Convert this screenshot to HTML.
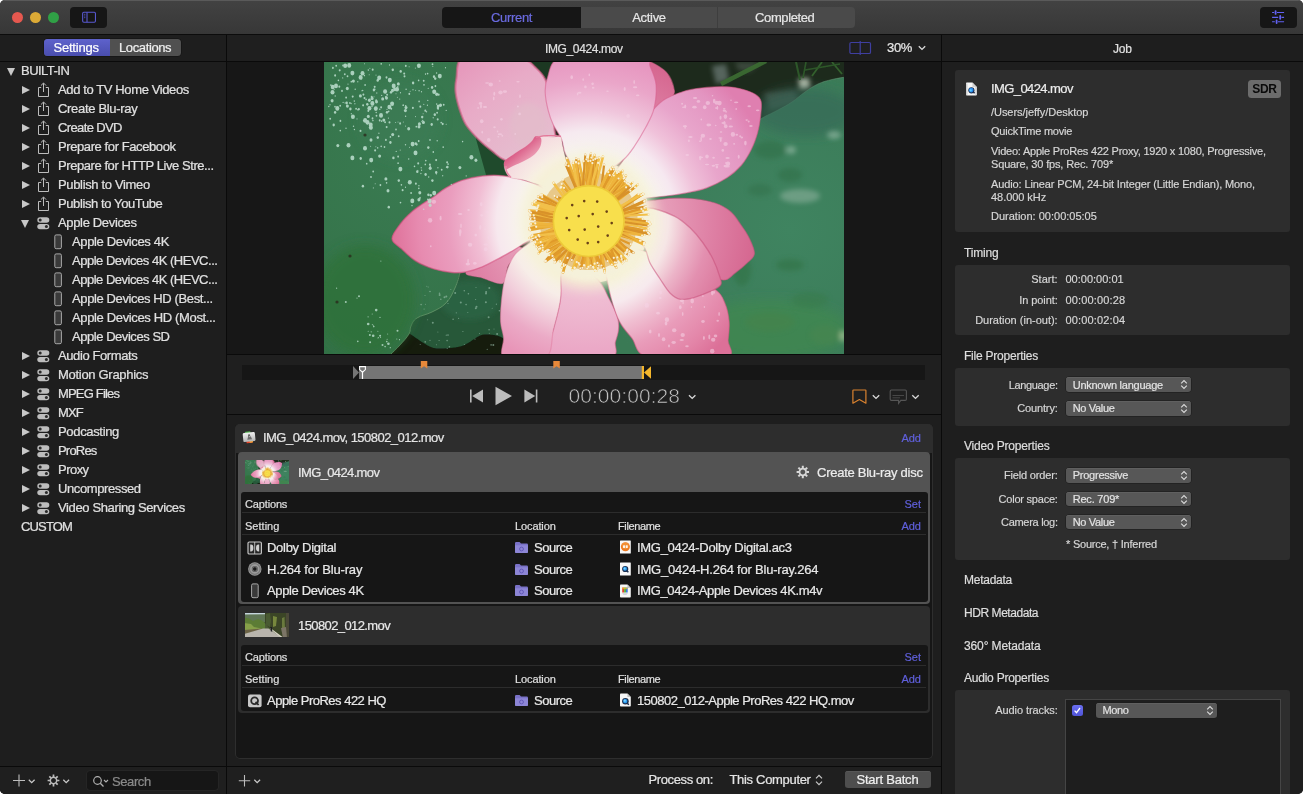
<!DOCTYPE html>
<html lang="en">
<head>
<meta charset="utf-8">
<title>Compressor</title>
<style>
*{box-sizing:border-box;margin:0;padding:0}
html,body{width:1306px;height:795px;background:#fff;overflow:hidden}
body{font-family:"Liberation Sans",sans-serif;font-size:13px;color:#dcdcdc;position:relative;-webkit-font-smoothing:antialiased}
.abs{position:absolute}
#win{will-change:transform;position:absolute;left:0;top:0;width:1303px;height:793.500px;background:#1e1e1e;border-radius:5px;overflow:hidden}
.t{position:absolute;white-space:nowrap;line-height:16px;letter-spacing:-.38px;-webkit-text-stroke:.22px}
.t11{position:absolute;white-space:nowrap;font-size:11px;line-height:14px;letter-spacing:-.18px;color:#d6d6d6;-webkit-text-stroke:.18px}
.t12{position:absolute;white-space:nowrap;font-size:12px;line-height:14px;letter-spacing:-.25px;color:#d9d9d9;-webkit-text-stroke:.2px}
/* title bar */
#titlebar{left:0;top:0;width:1304px;height:34px;background:linear-gradient(#424242,#373737);border-top:1px solid #5a5a5a}
#tbline{left:0;top:34px;width:1304px;height:1px;background:#0c0c0c}
.light{position:absolute;top:11.800px;width:11.300px;height:11.300px;border-radius:50%}
.tbbtn{position:absolute;top:7px;height:21px;background:#161616;border-radius:4px}
#tabs{left:442px;top:7px;width:413px;height:21px;border-radius:4px;background:#4a4a4a;overflow:hidden}
#tabs div{-webkit-text-stroke:.2px;position:absolute;top:0;height:21px;text-align:center;line-height:21px;letter-spacing:-.3px}
/* sidebar */
#sidebar{left:0;top:35px;width:226px;height:759px;background:#1e1e1e}
.vsep{position:absolute;width:1px;background:#0a0a0a}
.hsep{position:absolute;height:1px;background:#0a0a0a}
.row{position:absolute;left:0;width:226px;height:19px}
.row .t{top:1.300px;color:#e0e0e0}
.tri{position:absolute;width:0;height:0}
.tri.r{border-left:8px solid #c8c8c8;border-top:4.5px solid transparent;border-bottom:4.5px solid transparent}
.tri.d{border-top:8px solid #c8c8c8;border-left:4.5px solid transparent;border-right:4.5px solid transparent}
/* center */
#viewerhead{left:227px;top:35px;width:714px;height:26px;background:#1f1f1f}
#viewer{left:227px;top:62px;width:714px;height:292px;background:#171717}
#transport{left:227px;top:355px;width:714px;height:59px;background:#1f1f1f}
#batcharea{left:227px;top:415px;width:714px;height:351px;background:#1e1e1e}
#bottombar{left:0;top:767px;width:941px;height:27px;background:#1f1f1f}
/* right */
#right{left:942px;top:35px;width:362px;height:759px;background:#1e1e1e}
.card{position:absolute;left:955px;width:335px;background:#2d2d2d;border-radius:3px}
.sel{position:absolute;left:1066px;width:126px;height:15px;background:#575757;border-radius:3px;box-shadow:0 0 0 .5px #1a1a1a, inset 0 .5px 0 #6a6a6a}
.sel span{-webkit-text-stroke:.18px;position:absolute;left:6.400px;top:.4px;font-size:11px;line-height:15px;color:#e4e4e4;letter-spacing:-.18px;white-space:nowrap}
.sel svg{position:absolute;right:3px;top:2px}
.lab{position:absolute;font-size:11px;line-height:14px;letter-spacing:-.18px;color:#d6d6d6;white-space:nowrap;text-align:right;width:110px;-webkit-text-stroke:.18px;left:947.700px}
</style>
</head>
<body>
<div id="win">
<!-- TITLEBAR -->
<div id="titlebar" class="abs"></div>
<div id="tbline" class="abs"></div>
<div class="light" style="left:11.700px;background:#e5584f"></div>
<div class="light" style="left:29.700px;background:#dcaa36"></div>
<div class="light" style="left:47.800px;background:#30a046"></div>
<div class="tbbtn" style="left:70px;width:37px"></div>
<div class="tbbtn" style="left:1259.500px;width:37px"></div>
<div id="tabs" class="abs">
  <div style="left:0;width:139px;background:#161616;color:#6b6be0">Current</div>
  <div style="left:139px;width:136px;color:#e6e6e6">Active</div>
  <div style="left:275px;width:134.500px;color:#e6e6e6;border-left:1px solid #3e3e3e;letter-spacing:-.4px">Completed</div>
</div>
<!-- SIDEBAR -->
<div id="sidebar" class="abs"></div>
<div class="vsep" style="left:226px;top:35px;height:759px"></div>
<!-- CENTER -->
<div id="viewerhead" class="abs"></div>
<div class="hsep" style="left:0;top:61px;width:1304px"></div>
<div id="viewer" class="abs"></div>
<div class="hsep" style="left:227px;top:354px;width:714px"></div>
<div id="transport" class="abs"></div>
<div class="hsep" style="left:227px;top:414px;width:714px"></div>
<div id="batcharea" class="abs"></div>
<div class="hsep" style="left:0;top:766px;width:941px"></div>
<div id="bottombar" class="abs"></div>
<div class="vsep" style="left:226px;top:767px;height:27px"></div>
<!-- RIGHT -->
<div class="vsep" style="left:941px;top:35px;height:759px"></div>
<div id="right" class="abs"></div>
<div class="hsep" style="left:942px;top:61px;width:362px"></div>
<!-- TOOLBAR ICONS -->
<svg class="abs" style="left:70px;top:7px" width="37" height="21" viewBox="0 0 37 21"><rect x="12.650" y="5.250" width="12.800" height="10" rx="1.200" fill="none" stroke="#5858d0" stroke-width="1.100"/><path d="M17 5.250V15.250" stroke="#5858d0" stroke-width="1.100"/><path d="M14.200 7.300H15.300M14.200 9H15.300M14.200 10.700H15.300" stroke="#5a5ad8" stroke-width=".9"/></svg>
<svg class="abs" style="left:1259px;top:7px" width="38" height="21" viewBox="0 0 38 21"><g stroke="#6262f2" stroke-width="1.100" fill="none"><path d="M13.100 5.500H15.200M18 5.500H25.100M13.100 10.400H19.200M22.500 10.400H25.100M13.100 14.700H15.800M19 14.700H25.100"/></g><g stroke="#6262f2" stroke-width="1.800" stroke-linecap="round"><path d="M16.600 4.100V6.900M21.200 9V11.800M17.600 13.300V16.100"/></g></svg>
<!-- SIDEBAR CONTENT -->
<div class="abs" style="left:44px;top:39px;width:137px;height:17px;border-radius:3.5px;background:#505050;overflow:hidden;box-shadow:0 0 0 .5px #111"><div class="abs" style="left:0;top:0;width:66px;height:17px;background:linear-gradient(#5e62cc,#4a4eae)"></div><div class="t" style="left:9.5px;top:0.5px;color:#fff;letter-spacing:-.22px">Settings</div><div class="t" style="left:75px;top:0.5px;color:#f0f0f0;letter-spacing:-.38px">Locations</div></div>
<div class="row" style="top:62px"><i class="tri d" style="left:7px;top:6px"></i><div class="t" style="left:21px;letter-spacing:-0.527px">BUILT-IN</div></div>
<div class="row" style="top:81px"><i class="tri r" style="left:22px;top:4.5px"></i><svg class="abs" style="left:37px;top:1px" width="13" height="16" viewBox="0 0 13 16"><path d="M4.2 5.5H1.5V14.5H11.5V5.5H8.8" fill="none" stroke="#bdbdbd" stroke-width="1"/><path d="M6.5 10V1.2M3.9 3.6L6.5 1L9.1 3.6" fill="none" stroke="#bdbdbd" stroke-width="1"/></svg><div class="t" style="left:58px;letter-spacing:-0.384px">Add to TV Home Videos</div></div>
<div class="row" style="top:100px"><i class="tri r" style="left:22px;top:4.5px"></i><svg class="abs" style="left:37px;top:1px" width="13" height="16" viewBox="0 0 13 16"><path d="M4.2 5.5H1.5V14.5H11.5V5.5H8.8" fill="none" stroke="#bdbdbd" stroke-width="1"/><path d="M6.5 10V1.2M3.9 3.6L6.5 1L9.1 3.6" fill="none" stroke="#bdbdbd" stroke-width="1"/></svg><div class="t" style="left:58px;letter-spacing:-0.316px">Create Blu-ray</div></div>
<div class="row" style="top:119px"><i class="tri r" style="left:22px;top:4.5px"></i><svg class="abs" style="left:37px;top:1px" width="13" height="16" viewBox="0 0 13 16"><path d="M4.2 5.5H1.5V14.5H11.5V5.5H8.8" fill="none" stroke="#bdbdbd" stroke-width="1"/><path d="M6.5 10V1.2M3.9 3.6L6.5 1L9.1 3.6" fill="none" stroke="#bdbdbd" stroke-width="1"/></svg><div class="t" style="left:58px;letter-spacing:-0.63px">Create DVD</div></div>
<div class="row" style="top:138px"><i class="tri r" style="left:22px;top:4.5px"></i><svg class="abs" style="left:37px;top:1px" width="13" height="16" viewBox="0 0 13 16"><path d="M4.2 5.5H1.5V14.5H11.5V5.5H8.8" fill="none" stroke="#bdbdbd" stroke-width="1"/><path d="M6.5 10V1.2M3.9 3.6L6.5 1L9.1 3.6" fill="none" stroke="#bdbdbd" stroke-width="1"/></svg><div class="t" style="left:58px;letter-spacing:-0.407px">Prepare for Facebook</div></div>
<div class="row" style="top:157px"><i class="tri r" style="left:22px;top:4.5px"></i><svg class="abs" style="left:37px;top:1px" width="13" height="16" viewBox="0 0 13 16"><path d="M4.2 5.5H1.5V14.5H11.5V5.5H8.8" fill="none" stroke="#bdbdbd" stroke-width="1"/><path d="M6.5 10V1.2M3.9 3.6L6.5 1L9.1 3.6" fill="none" stroke="#bdbdbd" stroke-width="1"/></svg><div class="t" style="left:58px;letter-spacing:-0.429px">Prepare for HTTP Live Stre...</div></div>
<div class="row" style="top:176px"><i class="tri r" style="left:22px;top:4.5px"></i><svg class="abs" style="left:37px;top:1px" width="13" height="16" viewBox="0 0 13 16"><path d="M4.2 5.5H1.5V14.5H11.5V5.5H8.8" fill="none" stroke="#bdbdbd" stroke-width="1"/><path d="M6.5 10V1.2M3.9 3.6L6.5 1L9.1 3.6" fill="none" stroke="#bdbdbd" stroke-width="1"/></svg><div class="t" style="left:58px;letter-spacing:-0.341px">Publish to Vimeo</div></div>
<div class="row" style="top:195px"><i class="tri r" style="left:22px;top:4.5px"></i><svg class="abs" style="left:37px;top:1px" width="13" height="16" viewBox="0 0 13 16"><path d="M4.2 5.5H1.5V14.5H11.5V5.5H8.8" fill="none" stroke="#bdbdbd" stroke-width="1"/><path d="M6.5 10V1.2M3.9 3.6L6.5 1L9.1 3.6" fill="none" stroke="#bdbdbd" stroke-width="1"/></svg><div class="t" style="left:58px;letter-spacing:-0.397px">Publish to YouTube</div></div>
<div class="row" style="top:214px"><i class="tri d" style="left:21px;top:6px"></i><svg class="abs" style="left:37px;top:3px" width="13" height="13" viewBox="0 0 13 13"><rect x="0.3" y="0.3" width="12" height="5.4" rx="2.7" fill="#bdbdbd"/><rect x="0.3" y="6.9" width="12" height="5.4" rx="2.7" fill="#bdbdbd"/><circle cx="3.2" cy="3" r="1.5" fill="#2a2a2a"/><circle cx="9.4" cy="9.6" r="1.5" fill="#2a2a2a"/></svg><div class="t" style="left:58px;letter-spacing:-0.342px">Apple Devices</div></div>
<div class="row" style="top:233px"><svg class="abs" style="left:54px;top:1px" width="9" height="16" viewBox="0 0 9 16"><rect x="0.8" y="0.9" width="6.6" height="13.8" rx="1.4" fill="#3a3a3a" stroke="#a8a8a8" stroke-width="1"/></svg><div class="t" style="left:72px;letter-spacing:-0.354px">Apple Devices 4K</div></div>
<div class="row" style="top:252px"><svg class="abs" style="left:54px;top:1px" width="9" height="16" viewBox="0 0 9 16"><rect x="0.8" y="0.9" width="6.6" height="13.8" rx="1.4" fill="#3a3a3a" stroke="#a8a8a8" stroke-width="1"/></svg><div class="t" style="left:72px;letter-spacing:-0.484px">Apple Devices 4K (HEVC...</div></div>
<div class="row" style="top:271px"><svg class="abs" style="left:54px;top:1px" width="9" height="16" viewBox="0 0 9 16"><rect x="0.8" y="0.9" width="6.6" height="13.8" rx="1.4" fill="#3a3a3a" stroke="#a8a8a8" stroke-width="1"/></svg><div class="t" style="left:72px;letter-spacing:-0.484px">Apple Devices 4K (HEVC...</div></div>
<div class="row" style="top:290px"><svg class="abs" style="left:54px;top:1px" width="9" height="16" viewBox="0 0 9 16"><rect x="0.8" y="0.9" width="6.6" height="13.8" rx="1.4" fill="#3a3a3a" stroke="#a8a8a8" stroke-width="1"/></svg><div class="t" style="left:72px;letter-spacing:-0.382px">Apple Devices HD (Best...</div></div>
<div class="row" style="top:309px"><svg class="abs" style="left:54px;top:1px" width="9" height="16" viewBox="0 0 9 16"><rect x="0.8" y="0.9" width="6.6" height="13.8" rx="1.4" fill="#3a3a3a" stroke="#a8a8a8" stroke-width="1"/></svg><div class="t" style="left:72px;letter-spacing:-0.355px">Apple Devices HD (Most...</div></div>
<div class="row" style="top:328px"><svg class="abs" style="left:54px;top:1px" width="9" height="16" viewBox="0 0 9 16"><rect x="0.8" y="0.9" width="6.6" height="13.8" rx="1.4" fill="#3a3a3a" stroke="#a8a8a8" stroke-width="1"/></svg><div class="t" style="left:72px;letter-spacing:-0.451px">Apple Devices SD</div></div>
<div class="row" style="top:347px"><i class="tri r" style="left:22px;top:4.5px"></i><svg class="abs" style="left:37px;top:3px" width="13" height="13" viewBox="0 0 13 13"><rect x="0.3" y="0.3" width="12" height="5.4" rx="2.7" fill="#bdbdbd"/><rect x="0.3" y="6.9" width="12" height="5.4" rx="2.7" fill="#bdbdbd"/><circle cx="3.2" cy="3" r="1.5" fill="#2a2a2a"/><circle cx="9.4" cy="9.6" r="1.5" fill="#2a2a2a"/></svg><div class="t" style="left:58px;letter-spacing:-0.403px">Audio Formats</div></div>
<div class="row" style="top:366px"><i class="tri r" style="left:22px;top:4.5px"></i><svg class="abs" style="left:37px;top:3px" width="13" height="13" viewBox="0 0 13 13"><rect x="0.3" y="0.3" width="12" height="5.4" rx="2.7" fill="#bdbdbd"/><rect x="0.3" y="6.9" width="12" height="5.4" rx="2.7" fill="#bdbdbd"/><circle cx="3.2" cy="3" r="1.5" fill="#2a2a2a"/><circle cx="9.4" cy="9.6" r="1.5" fill="#2a2a2a"/></svg><div class="t" style="left:58px;letter-spacing:-0.296px">Motion Graphics</div></div>
<div class="row" style="top:385px"><i class="tri r" style="left:22px;top:4.5px"></i><svg class="abs" style="left:37px;top:3px" width="13" height="13" viewBox="0 0 13 13"><rect x="0.3" y="0.3" width="12" height="5.4" rx="2.7" fill="#bdbdbd"/><rect x="0.3" y="6.9" width="12" height="5.4" rx="2.7" fill="#bdbdbd"/><circle cx="3.2" cy="3" r="1.5" fill="#2a2a2a"/><circle cx="9.4" cy="9.6" r="1.5" fill="#2a2a2a"/></svg><div class="t" style="left:58px;letter-spacing:-0.815px">MPEG Files</div></div>
<div class="row" style="top:404px"><i class="tri r" style="left:22px;top:4.5px"></i><svg class="abs" style="left:37px;top:3px" width="13" height="13" viewBox="0 0 13 13"><rect x="0.3" y="0.3" width="12" height="5.4" rx="2.7" fill="#bdbdbd"/><rect x="0.3" y="6.9" width="12" height="5.4" rx="2.7" fill="#bdbdbd"/><circle cx="3.2" cy="3" r="1.5" fill="#2a2a2a"/><circle cx="9.4" cy="9.6" r="1.5" fill="#2a2a2a"/></svg><div class="t" style="left:58px;letter-spacing:-0.85px">MXF</div></div>
<div class="row" style="top:423px"><i class="tri r" style="left:22px;top:4.5px"></i><svg class="abs" style="left:37px;top:3px" width="13" height="13" viewBox="0 0 13 13"><rect x="0.3" y="0.3" width="12" height="5.4" rx="2.7" fill="#bdbdbd"/><rect x="0.3" y="6.9" width="12" height="5.4" rx="2.7" fill="#bdbdbd"/><circle cx="3.2" cy="3" r="1.5" fill="#2a2a2a"/><circle cx="9.4" cy="9.6" r="1.5" fill="#2a2a2a"/></svg><div class="t" style="left:58px;letter-spacing:-0.335px">Podcasting</div></div>
<div class="row" style="top:442px"><i class="tri r" style="left:22px;top:4.5px"></i><svg class="abs" style="left:37px;top:3px" width="13" height="13" viewBox="0 0 13 13"><rect x="0.3" y="0.3" width="12" height="5.4" rx="2.7" fill="#bdbdbd"/><rect x="0.3" y="6.9" width="12" height="5.4" rx="2.7" fill="#bdbdbd"/><circle cx="3.2" cy="3" r="1.5" fill="#2a2a2a"/><circle cx="9.4" cy="9.6" r="1.5" fill="#2a2a2a"/></svg><div class="t" style="left:58px;letter-spacing:-0.81px">ProRes</div></div>
<div class="row" style="top:461px"><i class="tri r" style="left:22px;top:4.5px"></i><svg class="abs" style="left:37px;top:3px" width="13" height="13" viewBox="0 0 13 13"><rect x="0.3" y="0.3" width="12" height="5.4" rx="2.7" fill="#bdbdbd"/><rect x="0.3" y="6.9" width="12" height="5.4" rx="2.7" fill="#bdbdbd"/><circle cx="3.2" cy="3" r="1.5" fill="#2a2a2a"/><circle cx="9.4" cy="9.6" r="1.5" fill="#2a2a2a"/></svg><div class="t" style="left:58px;letter-spacing:-0.531px">Proxy</div></div>
<div class="row" style="top:480px"><i class="tri r" style="left:22px;top:4.5px"></i><svg class="abs" style="left:37px;top:3px" width="13" height="13" viewBox="0 0 13 13"><rect x="0.3" y="0.3" width="12" height="5.4" rx="2.7" fill="#bdbdbd"/><rect x="0.3" y="6.9" width="12" height="5.4" rx="2.7" fill="#bdbdbd"/><circle cx="3.2" cy="3" r="1.5" fill="#2a2a2a"/><circle cx="9.4" cy="9.6" r="1.5" fill="#2a2a2a"/></svg><div class="t" style="left:58px;letter-spacing:-0.393px">Uncompressed</div></div>
<div class="row" style="top:499px"><i class="tri r" style="left:22px;top:4.5px"></i><svg class="abs" style="left:37px;top:3px" width="13" height="13" viewBox="0 0 13 13"><rect x="0.3" y="0.3" width="12" height="5.4" rx="2.7" fill="#bdbdbd"/><rect x="0.3" y="6.9" width="12" height="5.4" rx="2.7" fill="#bdbdbd"/><circle cx="3.2" cy="3" r="1.5" fill="#2a2a2a"/><circle cx="9.4" cy="9.6" r="1.5" fill="#2a2a2a"/></svg><div class="t" style="left:58px;letter-spacing:-0.366px">Video Sharing Services</div></div>
<div class="row" style="top:518px"><div class="t" style="left:21px;letter-spacing:-0.85px">CUSTOM</div></div>
<svg class="abs" style="left:10px;top:771px" width="70" height="20" viewBox="0 0 70 20">
<path d="M9 3.5V15.5M3 9.5H15" stroke="#bdbdbd" stroke-width="1.1" fill="none"/>
<path d="M18.8 8.8L21.7 11.6L24.6 8.8" stroke="#c8c8c8" stroke-width="1.3" fill="none"/>
<g transform="translate(43.5,9.5)" fill="none" stroke="#bdbdbd"><circle r="3.2" stroke-width="1.5"/><g stroke-width="1.7"><path d="M0 -3.6V-5.9M0 3.6V5.9M-3.6 0H-5.9M3.6 0H5.9M2.55 2.55L4.2 4.2M-2.55 2.55L-4.2 4.2M2.55 -2.55L4.2 -4.2M-2.55 -2.55L-4.2 -4.2"/></g></g>
<path d="M53.3 8.8L56.2 11.6L59.1 8.8" stroke="#c8c8c8" stroke-width="1.3" fill="none"/>
</svg>
<div class="abs" style="left:87px;top:771px;width:131px;height:19px;background:#161616;border-radius:3px;box-shadow:0 0 0 .5px #2c2c2c"></div>
<svg class="abs" style="left:91px;top:773px" width="20" height="16" viewBox="0 0 20 16"><circle cx="6.5" cy="7.5" r="3.8" fill="none" stroke="#b0b0b0" stroke-width="1.2"/><path d="M9.3 10.3L12.5 13.5" stroke="#b0b0b0" stroke-width="1.3"/><path d="M13 7L15 9L17 7" stroke="#b0b0b0" stroke-width="1.1" fill="none"/></svg>
<div class="t" style="left:112px;top:773.600px;color:#8a8a8a;letter-spacing:-.4px">Search</div>
<!-- FLOWER IMAGE -->
<svg class="abs" style="left:324px;top:62px" width="520" height="292" viewBox="324 62 520 292">
<defs>
<filter id="b1" x="-10%" y="-10%" width="120%" height="120%"><feGaussianBlur stdDeviation="0.7"/></filter>
<filter id="b2" x="-20%" y="-20%" width="140%" height="140%"><feGaussianBlur stdDeviation="2.5"/></filter>
<filter id="b3" x="-20%" y="-20%" width="140%" height="140%"><feGaussianBlur stdDeviation="6"/></filter>
<filter id="b0" x="-10%" y="-10%" width="120%" height="120%"><feGaussianBlur stdDeviation="0.35"/></filter>
<radialGradient id="gA" gradientUnits="userSpaceOnUse" cx="588.7" cy="221.1" r="200"><stop offset="0.35" stop-color="#e4c3d0"/><stop offset="0.55" stop-color="#e6b9cd"/><stop offset="0.8" stop-color="#e8abc7"/><stop offset="1" stop-color="#e699bc"/></radialGradient>
<radialGradient id="gB" gradientUnits="userSpaceOnUse" cx="588.7" cy="221.1" r="200"><stop offset="0.33" stop-color="#f7f5ee"/><stop offset="0.45" stop-color="#f6eaf0"/><stop offset="0.56" stop-color="#f0c6dc"/><stop offset="0.7" stop-color="#eaa6c9"/><stop offset="0.85" stop-color="#e693be"/><stop offset="1" stop-color="#e282b0"/></radialGradient>
<radialGradient id="gC" gradientUnits="userSpaceOnUse" cx="588.7" cy="221.1" r="200"><stop offset="0.33" stop-color="#f8f6ef"/><stop offset="0.44" stop-color="#f6e8f0"/><stop offset="0.55" stop-color="#f0c2da"/><stop offset="0.68" stop-color="#e8a5cb"/><stop offset="0.85" stop-color="#e395c1"/><stop offset="0.96" stop-color="#df7fb0"/></radialGradient>
<radialGradient id="gD" gradientUnits="userSpaceOnUse" cx="588.7" cy="221.1" r="200"><stop offset="0.3" stop-color="#e9a8c0"/><stop offset="0.6" stop-color="#df82a6"/><stop offset="0.85" stop-color="#d5668f"/></radialGradient>
<radialGradient id="gE" gradientUnits="userSpaceOnUse" cx="588.7" cy="221.1" r="200"><stop offset="0.3" stop-color="#f8f5e6"/><stop offset="0.4" stop-color="#f6e6e6"/><stop offset="0.5" stop-color="#ecb4c8"/><stop offset="0.6" stop-color="#e390b0"/><stop offset="0.72" stop-color="#dc7a9e"/></radialGradient>
<radialGradient id="gF" gradientUnits="userSpaceOnUse" cx="588.7" cy="221.1" r="200"><stop offset="0.3" stop-color="#f9f6ea"/><stop offset="0.43" stop-color="#f7eaee"/><stop offset="0.54" stop-color="#f0c0d2"/><stop offset="0.66" stop-color="#e99cba"/><stop offset="0.8" stop-color="#e385a8"/><stop offset="0.9" stop-color="#dc7098"/></radialGradient>
<radialGradient id="gG" gradientUnits="userSpaceOnUse" cx="588.7" cy="221.1" r="200"><stop offset="0.2" stop-color="#f4d6e0"/><stop offset="0.4" stop-color="#efbcd2"/><stop offset="0.7" stop-color="#eaa4c4"/></radialGradient>
<radialGradient id="gH" gradientUnits="userSpaceOnUse" cx="588.7" cy="221.1" r="200"><stop offset="0.28" stop-color="#f8f6e6"/><stop offset="0.4" stop-color="#f7ede8"/><stop offset="0.5" stop-color="#f2d0dc"/><stop offset="0.62" stop-color="#ebaac6"/><stop offset="0.75" stop-color="#e895b8"/></radialGradient>
<radialGradient id="gI" gradientUnits="userSpaceOnUse" cx="588.7" cy="221.1" r="200"><stop offset="0.33" stop-color="#f8f6ee"/><stop offset="0.46" stop-color="#f7e8ee"/><stop offset="0.56" stop-color="#f1bed4"/><stop offset="0.7" stop-color="#ea9dbe"/><stop offset="0.85" stop-color="#e78bb0"/><stop offset="1" stop-color="#de6f98"/></radialGradient>
<radialGradient id="gJ" gradientUnits="userSpaceOnUse" cx="588.7" cy="221.1" r="200"><stop offset="0.15" stop-color="#f9f6e6"/><stop offset="0.35" stop-color="#f8f0e6"/><stop offset="0.5" stop-color="#f4d6de"/></radialGradient>
<radialGradient id="gLeafL" gradientUnits="userSpaceOnUse" cx="420" cy="150" r="330"><stop offset="0" stop-color="#3a7b52"/><stop offset="0.5" stop-color="#35744a"/><stop offset="1" stop-color="#306c42"/></radialGradient>
<radialGradient id="gLeafR" gradientUnits="userSpaceOnUse" cx="790" cy="230" r="200"><stop offset="0" stop-color="#3f8460"/><stop offset="0.6" stop-color="#3c7d5a"/><stop offset="1" stop-color="#3a7a55"/></radialGradient>
<clipPath id="clipimg"><rect x="324" y="62" width="520" height="292"/></clipPath>
</defs>
<g id="flowerg" clip-path="url(#clipimg)">
<rect x="324" y="62" width="520" height="292" fill="#1d2a1c"/>
<g filter="url(#b2)"><path d="M712 66L726 64L729 80L716 84Z" fill="#6a7874" opacity=".75"/><path d="M764 93L796 90L798 104L770 110Z" fill="#4c5852" opacity=".7"/><path d="M798 79L809 78L810 88L800 90Z" fill="#d4dccc" opacity=".8"/><path d="M735 62L760 62L750 72L738 70Z" fill="#59665e" opacity=".5"/></g>
<g filter="url(#b1)" stroke="#3a6a32" fill="none" opacity=".95"><path d="M721 84L766 61" stroke-width="4.500"/><path d="M796 62L800 80" stroke-width="2" stroke="#2f5a2a"/><path d="M806 62L803 78" stroke-width="1.600" stroke="#2f5a2a"/><path d="M822 62L812 76" stroke-width="1.800" stroke="#35642e"/><path d="M832 62L842 74" stroke-width="1.800" stroke="#35642e"/><path d="M805 70L840 64" stroke-width="1.500" stroke="#2f5a2a"/></g>
<path d="M385 268H520V354H385Z" fill="#275839"/>
<g filter="url(#b2)"><ellipse cx="470" cy="300" rx="30" ry="20" fill="#2c6444" opacity=".8"/></g>
<path d="M409.3 333.8C412.4 331.0 408.1 332.9 411.3 334.8C414.5 336.7 426.8 346.5 433.6 348.0C440.4 349.5 455.5 347.8 462.0 346.0C468.5 344.2 476.9 335.9 482.3 334.8C487.7 333.7 499.6 335.1 502.6 337.9C505.6 340.7 520.3 353.6 505.0 356.0C489.7 358.4 400.8 359.0 388.0 356.0C375.2 353.0 406.2 336.6 409.3 333.8Z" fill="#131c0f" filter="url(#b1)"/>
<path d="M470 130L520 150L515 182L480 180Z" fill="#1f4a2c"/>
<path d="M525 62H562V82H530Z" fill="#1c3822"/>
<path d="M324 62L480 62L476 139L486 175L492 200L480 250L470.0 262.0C468.0 264.2 463.0 267.8 460.0 273.0C457.0 278.2 457.8 282.0 455.0 288.0C452.2 294.0 450.6 298.2 446.0 303.0C441.4 307.8 437.8 309.0 432.0 312.0C426.2 315.0 421.2 315.2 417.0 318.0C412.8 320.8 412.6 322.8 411.0 326.0C409.4 329.2 411.2 330.2 409.0 334.0C406.8 337.8 403.6 341.0 400.0 345.0C396.4 349.0 392.8 352.2 391.0 354.0L324 354Z" fill="url(#gLeafL)"/>
<path d="M460.0 273.0C459.0 276.0 457.8 282.0 455.0 288.0C452.2 294.0 450.6 298.2 446.0 303.0C441.4 307.8 437.8 309.0 432.0 312.0C426.2 315.0 421.2 315.2 417.0 318.0C412.8 320.8 412.6 322.8 411.0 326.0C409.4 329.2 411.2 330.2 409.0 334.0C406.8 337.8 403.6 341.0 400.0 345.0C396.4 349.0 392.8 352.2 391.0 354.0" fill="none" stroke="#7aa878" stroke-width="1" opacity=".6" filter="url(#b0)"/>
<g filter="url(#b3)"><ellipse cx="365" cy="300" rx="50" ry="55" fill="#30723a" opacity=".85"/><ellipse cx="400" cy="120" rx="40" ry="40" fill="#3b7c58" opacity=".5"/></g>
<path d="M846.0 77.0C843.2 77.5 837.6 78.1 832.0 79.5C826.4 80.9 823.4 81.5 818.0 84.0C812.6 86.5 810.2 88.4 805.0 92.0C799.8 95.6 797.4 98.4 792.0 102.0C786.6 105.6 783.6 107.0 778.0 110.0C772.4 113.0 768.6 114.6 764.0 117.0C759.4 119.4 756.8 121.0 755.0 122.0L700 160L630 200L600 260L600 354L846 354Z" fill="url(#gLeafR)"/>
<path d="M846.0 77.0C843.2 77.5 837.6 78.1 832.0 79.5C826.4 80.9 823.4 81.5 818.0 84.0C812.6 86.5 810.2 88.4 805.0 92.0C799.8 95.6 797.4 98.4 792.0 102.0C786.6 105.6 783.6 107.0 778.0 110.0C772.4 113.0 768.6 114.6 764.0 117.0C759.4 119.4 756.8 121.0 755.0 122.0" fill="none" stroke="#6a9a7a" stroke-width="1" opacity=".5" filter="url(#b0)"/>
<g filter="url(#b3)"><ellipse cx="805" cy="112" rx="50" ry="24" fill="#346858" opacity=".65"/></g>
<g filter="url(#b3)"><ellipse cx="770" cy="330" rx="80" ry="30" fill="#3f8a4c" opacity=".6"/></g>
<g filter="url(#b2)" opacity=".5">
<ellipse cx="843" cy="336" rx="3" ry="6" fill="#e8ecc0"/>
<ellipse cx="770" cy="150" rx="16" ry="9" fill="#2f6d45"/>
<ellipse cx="790" cy="175" rx="12" ry="7" fill="#2f6d45"/>
<ellipse cx="760" cy="190" rx="12" ry="6" fill="#336f48"/>
<ellipse cx="800" cy="196" rx="20" ry="7" fill="#9bb9a8"/>
<ellipse cx="742" cy="270" rx="9" ry="16" fill="#2f7040"/>
<ellipse cx="790" cy="265" rx="14" ry="6" fill="#2f7040"/>
<ellipse cx="810" cy="300" rx="18" ry="8" fill="#377a48"/>
<ellipse cx="770" cy="322" rx="25" ry="10" fill="#47824a"/>
<ellipse cx="825" cy="335" rx="15" ry="10" fill="#4a8550"/>
<ellipse cx="791" cy="150" rx="5" ry="4" fill="#b0ccbc"/>
<ellipse cx="834" cy="135" rx="7" ry="4" fill="#b0ccbc"/>
</g>
<circle cx="588.7" cy="221.1" r="62" fill="#f3e6d2"/>
<path d="M640.0 62.0C641.0 53.7 641.6 58.3 646.0 60.0C650.4 61.7 661.5 67.1 666.2 72.2C670.9 77.3 673.6 86.1 674.3 90.5C675.0 94.9 672.2 95.7 670.2 98.6C668.2 101.5 665.4 104.8 662.0 108.0C658.6 111.2 653.7 117.7 650.0 118.0C646.3 118.3 641.7 119.3 640.0 110.0C638.3 100.7 639.0 70.3 640.0 62.0Z" fill="url(#gD)"/>
<path d="M640.0 62.0C641.0 53.7 641.6 58.3 646.0 60.0C650.4 61.7 661.5 67.1 666.2 72.2C670.9 77.3 673.6 86.1 674.3 90.5C675.0 94.9 672.2 95.7 670.2 98.6C668.2 101.5 665.4 104.8 662.0 108.0C658.6 111.2 653.7 117.7 650.0 118.0C646.3 118.3 641.7 119.3 640.0 110.0C638.3 100.7 639.0 70.3 640.0 62.0Z" fill="none" stroke="#d9648f" stroke-width="1.2" opacity="0.55" filter="url(#b1)"/>
<path d="M640.0 207.0C640.0 200.2 651.7 200.9 660.0 199.5C668.3 198.1 680.8 197.9 690.0 198.5C699.2 199.1 708.2 200.8 715.0 203.0C721.8 205.2 726.7 208.3 731.0 212.0C735.3 215.7 737.9 220.6 741.0 225.0C744.1 229.4 747.2 233.6 749.4 238.4C751.6 243.2 754.8 249.6 754.4 253.7C754.0 257.8 750.5 259.6 747.3 262.8C744.1 266.0 739.2 270.0 735.2 272.9C731.2 275.8 728.9 280.5 723.0 280.0C717.1 279.5 710.5 276.7 700.0 270.0C689.5 263.3 670.0 250.5 660.0 240.0C650.0 229.5 640.0 213.8 640.0 207.0Z" fill="url(#gD)"/>
<path d="M640.0 207.0C640.0 200.2 651.7 200.9 660.0 199.5C668.3 198.1 680.8 197.9 690.0 198.5C699.2 199.1 708.2 200.8 715.0 203.0C721.8 205.2 726.7 208.3 731.0 212.0C735.3 215.7 737.9 220.6 741.0 225.0C744.1 229.4 747.2 233.6 749.4 238.4C751.6 243.2 754.8 249.6 754.4 253.7C754.0 257.8 750.5 259.6 747.3 262.8C744.1 266.0 739.2 270.0 735.2 272.9C731.2 275.8 728.9 280.5 723.0 280.0C717.1 279.5 710.5 276.7 700.0 270.0C689.5 263.3 670.0 250.5 660.0 240.0C650.0 229.5 640.0 213.8 640.0 207.0Z" fill="none" stroke="#c8557f" stroke-width="1.2" opacity="0.55" filter="url(#b1)"/>
<path d="M462.0 58.0C455.6 61.7 457.5 72.5 456.4 78.3C455.3 84.0 455.0 87.1 455.6 92.5C456.2 97.9 458.2 105.4 460.0 110.8C461.8 116.2 463.1 120.3 466.1 125.0C469.2 129.7 473.9 134.8 478.3 139.2C482.7 143.6 487.9 147.8 492.5 151.3C497.1 154.9 499.4 158.2 505.7 160.5C511.9 162.8 521.0 166.8 530.0 165.0C539.0 163.2 555.8 155.0 560.0 150.0C564.2 145.0 556.5 140.3 555.4 135.1C554.3 129.9 554.2 125.0 553.4 118.9C552.5 112.8 551.7 105.2 550.3 98.6C548.9 92.0 547.7 84.5 545.2 79.3C542.7 74.0 538.5 70.3 535.1 67.1C531.7 63.9 531.7 61.9 525.0 60.0C518.3 58.1 505.5 56.3 495.0 56.0C484.5 55.7 468.4 54.3 462.0 58.0Z" fill="url(#gA)"/>
<path d="M462.0 58.0C455.6 61.7 457.5 72.5 456.4 78.3C455.3 84.0 455.0 87.1 455.6 92.5C456.2 97.9 458.2 105.4 460.0 110.8C461.8 116.2 463.1 120.3 466.1 125.0C469.2 129.7 473.9 134.8 478.3 139.2C482.7 143.6 487.9 147.8 492.5 151.3C497.1 154.9 499.4 158.2 505.7 160.5C511.9 162.8 521.0 166.8 530.0 165.0C539.0 163.2 555.8 155.0 560.0 150.0C564.2 145.0 556.5 140.3 555.4 135.1C554.3 129.9 554.2 125.0 553.4 118.9C552.5 112.8 551.7 105.2 550.3 98.6C548.9 92.0 547.7 84.5 545.2 79.3C542.7 74.0 538.5 70.3 535.1 67.1C531.7 63.9 531.7 61.9 525.0 60.0C518.3 58.1 505.5 56.3 495.0 56.0C484.5 55.7 468.4 54.3 462.0 58.0Z" fill="none" stroke="#d9608a" stroke-width="2.2" opacity="0.6" filter="url(#b1)"/>
<g filter="url(#b2)"><ellipse cx="528" cy="125" rx="18" ry="22" fill="#e3bccb" opacity=".7"/></g>
<path d="M570.0 262.0C576.0 263.5 590.6 272.8 597.2 279.0C603.8 285.2 606.0 292.9 609.4 299.3C612.8 305.7 616.0 312.5 617.5 317.6C619.0 322.7 618.9 325.8 618.5 329.8C618.1 333.9 616.9 337.2 615.4 341.9C613.9 346.6 621.1 355.3 609.4 358.0C597.7 360.7 554.5 362.7 545.2 358.0C535.9 353.3 550.9 339.6 553.4 329.8C555.9 320.0 559.1 309.3 560.5 299.3C561.9 289.3 559.9 276.2 561.5 270.0C563.1 263.8 564.0 260.5 570.0 262.0Z" fill="url(#gG)"/>
<path d="M570.0 262.0C576.0 263.5 590.6 272.8 597.2 279.0C603.8 285.2 606.0 292.9 609.4 299.3C612.8 305.7 616.0 312.5 617.5 317.6C619.0 322.7 618.9 325.8 618.5 329.8C618.1 333.9 616.9 337.2 615.4 341.9C613.9 346.6 621.1 355.3 609.4 358.0C597.7 360.7 554.5 362.7 545.2 358.0C535.9 353.3 550.9 339.6 553.4 329.8C555.9 320.0 559.1 309.3 560.5 299.3C561.9 289.3 559.9 276.2 561.5 270.0C563.1 263.8 564.0 260.5 570.0 262.0Z" fill="none" stroke="#d9648f" stroke-width="1.2" opacity="0.55" filter="url(#b1)"/>
<path d="M466.1 271.9C463.2 276.6 476.9 276.1 482.3 278.0C487.7 279.9 494.9 283.0 498.6 283.5C502.3 284.0 503.0 284.1 504.7 281.0C506.4 277.9 505.7 270.2 508.7 264.8C511.7 259.4 524.4 251.1 522.9 248.6C521.4 246.1 509.5 246.1 500.0 250.0C490.5 253.9 469.1 267.2 466.1 271.9Z" fill="url(#gD)"/>
<path d="M466.1 271.9C463.2 276.6 476.9 276.1 482.3 278.0C487.7 279.9 494.9 283.0 498.6 283.5C502.3 284.0 503.0 284.1 504.7 281.0C506.4 277.9 505.7 270.2 508.7 264.8C511.7 259.4 524.4 251.1 522.9 248.6C521.4 246.1 509.5 246.1 500.0 250.0C490.5 253.9 469.1 267.2 466.1 271.9Z" fill="none" stroke="#d8608c" stroke-width="1" opacity="0.4" filter="url(#b1)"/>
<path d="M600.0 255.0C605.8 251.3 626.7 247.5 640.0 250.0C653.3 252.5 667.5 263.5 680.0 270.0C692.5 276.5 707.4 283.6 714.9 289.2C722.4 294.8 722.6 298.0 725.0 303.4C727.4 308.8 728.6 315.5 729.1 321.6C729.6 327.7 728.8 333.8 728.1 339.9C727.4 346.0 738.0 355.0 725.0 358.0C712.0 361.0 665.4 361.4 649.9 358.0C634.4 354.6 636.8 344.0 631.7 337.9C626.6 331.8 622.9 328.0 619.5 321.6C616.1 315.2 613.8 307.6 611.4 299.3C609.0 291.0 607.2 279.4 605.3 272.0C603.4 264.6 594.2 258.7 600.0 255.0Z" fill="url(#gF)"/>
<path d="M600.0 255.0C605.8 251.3 626.7 247.5 640.0 250.0C653.3 252.5 667.5 263.5 680.0 270.0C692.5 276.5 707.4 283.6 714.9 289.2C722.4 294.8 722.6 298.0 725.0 303.4C727.4 308.8 728.6 315.5 729.1 321.6C729.6 327.7 728.8 333.8 728.1 339.9C727.4 346.0 738.0 355.0 725.0 358.0C712.0 361.0 665.4 361.4 649.9 358.0C634.4 354.6 636.8 344.0 631.7 337.9C626.6 331.8 622.9 328.0 619.5 321.6C616.1 315.2 613.8 307.6 611.4 299.3C609.0 291.0 607.2 279.4 605.3 272.0C603.4 264.6 594.2 258.7 600.0 255.0Z" fill="none" stroke="#d65c86" stroke-width="1.2" opacity="0.55" filter="url(#b1)"/>
<path d="M623.6 159.5C628.4 151.0 630.3 145.6 633.7 139.2C637.1 132.8 640.4 126.0 643.8 120.9C647.2 115.8 650.3 112.4 654.0 108.7C657.7 105.0 660.8 101.6 666.2 98.6C671.6 95.6 679.7 92.4 686.5 90.5C693.3 88.6 700.0 88.0 706.8 87.4C713.5 86.8 720.9 86.5 727.0 86.8C733.1 87.1 738.5 88.2 743.3 89.5C748.0 90.8 752.5 92.5 755.5 94.5C758.5 96.5 760.3 97.9 761.1 101.6C761.9 105.3 761.1 111.5 760.5 116.8C759.9 122.0 759.0 127.7 757.5 133.1C756.0 138.5 754.1 143.9 751.4 149.3C748.7 154.7 745.3 160.8 741.2 165.5C737.1 170.2 732.7 174.0 727.0 177.7C721.3 181.4 713.5 185.4 706.8 187.9C700.0 190.4 693.3 191.6 686.5 192.9C679.7 194.2 673.0 195.2 666.2 196.0C659.4 196.8 652.8 197.3 645.9 198.0C639.0 198.7 631.8 201.3 625.0 200.0C618.2 198.7 605.2 196.8 605.0 190.0C604.8 183.2 618.8 168.0 623.6 159.5Z" fill="url(#gC)"/>
<path d="M623.6 159.5C628.4 151.0 630.3 145.6 633.7 139.2C637.1 132.8 640.4 126.0 643.8 120.9C647.2 115.8 650.3 112.4 654.0 108.7C657.7 105.0 660.8 101.6 666.2 98.6C671.6 95.6 679.7 92.4 686.5 90.5C693.3 88.6 700.0 88.0 706.8 87.4C713.5 86.8 720.9 86.5 727.0 86.8C733.1 87.1 738.5 88.2 743.3 89.5C748.0 90.8 752.5 92.5 755.5 94.5C758.5 96.5 760.3 97.9 761.1 101.6C761.9 105.3 761.1 111.5 760.5 116.8C759.9 122.0 759.0 127.7 757.5 133.1C756.0 138.5 754.1 143.9 751.4 149.3C748.7 154.7 745.3 160.8 741.2 165.5C737.1 170.2 732.7 174.0 727.0 177.7C721.3 181.4 713.5 185.4 706.8 187.9C700.0 190.4 693.3 191.6 686.5 192.9C679.7 194.2 673.0 195.2 666.2 196.0C659.4 196.8 652.8 197.3 645.9 198.0C639.0 198.7 631.8 201.3 625.0 200.0C618.2 198.7 605.2 196.8 605.0 190.0C604.8 183.2 618.8 168.0 623.6 159.5Z" fill="none" stroke="#d65c88" stroke-width="1.2" opacity="0.55" filter="url(#b1)"/>
<path d="M558.4 58.0C549.6 62.0 549.5 72.5 547.3 78.3C545.1 84.0 545.0 87.1 545.2 92.5C545.4 97.9 546.9 105.4 548.3 110.8C549.7 116.2 551.2 120.3 553.4 125.0C555.6 129.7 559.4 134.2 561.5 139.2C563.6 144.2 562.9 149.9 566.0 155.0C569.1 160.1 572.7 167.8 580.0 170.0C587.3 172.2 602.7 169.8 610.0 168.0C617.3 166.2 619.6 162.9 623.6 159.5C627.6 156.1 630.0 152.7 633.7 147.3C637.4 141.9 642.5 133.4 645.9 127.0C649.3 120.6 652.3 115.8 654.0 108.7C655.7 101.6 656.7 91.5 656.0 84.4C655.3 77.3 651.7 70.7 650.0 66.0C648.3 61.3 654.2 58.0 645.9 56.0C637.6 54.0 614.6 53.7 600.0 54.0C585.4 54.3 567.2 54.0 558.4 58.0Z" fill="url(#gB)"/>
<path d="M558.4 58.0C549.6 62.0 549.5 72.5 547.3 78.3C545.1 84.0 545.0 87.1 545.2 92.5C545.4 97.9 546.9 105.4 548.3 110.8C549.7 116.2 551.2 120.3 553.4 125.0C555.6 129.7 559.4 134.2 561.5 139.2C563.6 144.2 562.9 149.9 566.0 155.0C569.1 160.1 572.7 167.8 580.0 170.0C587.3 172.2 602.7 169.8 610.0 168.0C617.3 166.2 619.6 162.9 623.6 159.5C627.6 156.1 630.0 152.7 633.7 147.3C637.4 141.9 642.5 133.4 645.9 127.0C649.3 120.6 652.3 115.8 654.0 108.7C655.7 101.6 656.7 91.5 656.0 84.4C655.3 77.3 651.7 70.7 650.0 66.0C648.3 61.3 654.2 58.0 645.9 56.0C637.6 54.0 614.6 53.7 600.0 54.0C585.4 54.3 567.2 54.0 558.4 58.0Z" fill="none" stroke="#d8608e" stroke-width="1.2" opacity="0.55" filter="url(#b1)"/>
<path d="M392.0 238.4C392.0 234.1 397.8 227.3 401.0 223.0C404.2 218.7 407.6 215.6 411.0 212.5C414.4 209.4 417.7 207.2 421.5 204.5C425.3 201.8 429.9 199.3 434.0 196.5C438.1 193.7 441.3 190.5 446.0 187.8C450.7 185.1 455.9 182.3 462.0 180.3C468.1 178.3 475.5 176.8 482.3 176.0C489.1 175.2 495.8 175.1 502.6 175.7C509.4 176.3 515.8 177.4 522.9 179.8C530.0 182.2 539.5 184.1 545.0 190.0C550.5 195.9 556.0 207.0 556.0 215.0C556.0 223.0 549.2 233.8 545.0 238.0C540.8 242.2 536.2 238.0 531.0 240.0C525.8 242.0 519.4 246.9 514.0 250.0C508.6 253.1 503.9 255.9 498.6 258.7C493.3 261.5 487.7 264.6 482.3 266.8C476.9 269.0 471.2 270.9 466.1 271.9C461.0 272.8 457.3 273.0 451.9 272.5C446.5 272.0 439.7 270.8 433.6 268.9C427.5 266.9 420.8 264.2 415.4 260.8C410.0 257.4 405.1 252.3 401.2 248.6C397.3 244.9 392.0 242.7 392.0 238.4Z" fill="url(#gI)"/>
<path d="M392.0 238.4C392.0 234.1 397.8 227.3 401.0 223.0C404.2 218.7 407.6 215.6 411.0 212.5C414.4 209.4 417.7 207.2 421.5 204.5C425.3 201.8 429.9 199.3 434.0 196.5C438.1 193.7 441.3 190.5 446.0 187.8C450.7 185.1 455.9 182.3 462.0 180.3C468.1 178.3 475.5 176.8 482.3 176.0C489.1 175.2 495.8 175.1 502.6 175.7C509.4 176.3 515.8 177.4 522.9 179.8C530.0 182.2 539.5 184.1 545.0 190.0C550.5 195.9 556.0 207.0 556.0 215.0C556.0 223.0 549.2 233.8 545.0 238.0C540.8 242.2 536.2 238.0 531.0 240.0C525.8 242.0 519.4 246.9 514.0 250.0C508.6 253.1 503.9 255.9 498.6 258.7C493.3 261.5 487.7 264.6 482.3 266.8C476.9 269.0 471.2 270.9 466.1 271.9C461.0 272.8 457.3 273.0 451.9 272.5C446.5 272.0 439.7 270.8 433.6 268.9C427.5 266.9 420.8 264.2 415.4 260.8C410.0 257.4 405.1 252.3 401.2 248.6C397.3 244.9 392.0 242.7 392.0 238.4Z" fill="none" stroke="#d4507e" stroke-width="1.4" opacity="0.6" filter="url(#b1)"/>
<path d="M545.0 232.0C540.2 232.4 538.1 236.7 533.1 240.5C528.1 244.3 519.4 248.9 514.8 254.7C510.2 260.4 507.9 267.6 505.7 275.0C503.5 282.4 502.5 291.5 501.6 299.3C500.8 307.1 500.3 315.2 500.6 321.6C500.9 328.0 502.9 331.8 503.6 337.9C504.3 344.0 497.8 354.6 504.7 358.0C511.6 361.4 537.1 362.7 545.2 358.0C553.3 353.3 550.9 339.6 553.4 329.8C555.9 320.0 559.2 308.9 560.5 299.3C561.8 289.7 560.1 280.2 561.0 272.0C561.9 263.8 565.8 255.7 566.0 250.0C566.2 244.3 565.5 241.0 562.0 238.0C558.5 235.0 549.8 231.6 545.0 232.0Z" fill="url(#gH)"/>
<path d="M545.0 232.0C540.2 232.4 538.1 236.7 533.1 240.5C528.1 244.3 519.4 248.9 514.8 254.7C510.2 260.4 507.9 267.6 505.7 275.0C503.5 282.4 502.5 291.5 501.6 299.3C500.8 307.1 500.3 315.2 500.6 321.6C500.9 328.0 502.9 331.8 503.6 337.9C504.3 344.0 497.8 354.6 504.7 358.0C511.6 361.4 537.1 362.7 545.2 358.0C553.3 353.3 550.9 339.6 553.4 329.8C555.9 320.0 559.2 308.9 560.5 299.3C561.8 289.7 560.1 280.2 561.0 272.0C561.9 263.8 565.8 255.7 566.0 250.0C566.2 244.3 565.5 241.0 562.0 238.0C558.5 235.0 549.8 231.6 545.0 232.0Z" fill="none" stroke="#e07a9e" stroke-width="1.2" opacity="0.5" filter="url(#b1)"/>
<path d="M630.0 215.0C633.3 210.3 640.5 207.8 647.9 208.0C655.3 208.2 667.2 212.7 674.3 216.1C681.4 219.5 685.8 223.9 690.5 228.3C695.2 232.7 699.0 237.4 702.7 242.5C706.4 247.6 709.9 252.9 712.8 258.7C715.7 264.4 718.6 272.6 719.9 277.0C721.2 281.4 722.1 282.7 720.6 285.1C719.1 287.5 715.1 289.2 710.8 291.2C706.5 293.2 699.7 295.9 694.6 297.3C689.5 298.7 684.5 300.0 680.4 299.3C676.3 298.6 673.6 296.6 670.2 293.2C666.8 289.8 663.5 284.1 660.1 279.0C656.7 273.9 652.6 268.2 649.9 262.8C647.2 257.4 647.4 251.1 643.8 246.6C640.1 242.1 630.3 241.3 628.0 236.0C625.7 230.7 626.7 219.7 630.0 215.0Z" fill="url(#gE)"/>
<path d="M630.0 215.0C633.3 210.3 640.5 207.8 647.9 208.0C655.3 208.2 667.2 212.7 674.3 216.1C681.4 219.5 685.8 223.9 690.5 228.3C695.2 232.7 699.0 237.4 702.7 242.5C706.4 247.6 709.9 252.9 712.8 258.7C715.7 264.4 718.6 272.6 719.9 277.0C721.2 281.4 722.1 282.7 720.6 285.1C719.1 287.5 715.1 289.2 710.8 291.2C706.5 293.2 699.7 295.9 694.6 297.3C689.5 298.7 684.5 300.0 680.4 299.3C676.3 298.6 673.6 296.6 670.2 293.2C666.8 289.8 663.5 284.1 660.1 279.0C656.7 273.9 652.6 268.2 649.9 262.8C647.2 257.4 647.4 251.1 643.8 246.6C640.1 242.1 630.3 241.3 628.0 236.0C625.7 230.7 626.7 219.7 630.0 215.0Z" fill="none" stroke="#c8507a" stroke-width="1.3" opacity="0.55" filter="url(#b1)"/>
<path d="M505.7 160.5C507.5 158.6 511.6 155.6 514.8 153.4C518.0 151.2 522.1 149.3 525.0 147.3C527.9 145.3 530.3 142.9 532.0 141.2C533.7 139.5 533.2 137.9 535.1 137.1C537.0 136.2 540.2 136.1 543.2 136.1C546.2 136.1 550.5 137.1 553.4 137.1C556.3 137.1 559.0 134.7 560.5 136.1C562.0 137.5 561.7 141.7 562.5 145.3C563.3 149.0 564.2 153.1 565.5 158.0C566.8 162.9 569.9 169.3 570.0 175.0C570.1 180.7 570.5 190.2 566.0 192.0C561.5 193.8 550.4 188.0 543.2 186.0C536.0 184.0 528.3 181.2 522.9 179.8C517.5 178.4 513.6 179.1 510.7 177.7C507.8 176.3 506.8 173.7 505.7 171.6C504.6 169.5 504.2 166.8 504.2 165.0C504.2 163.2 503.9 162.4 505.7 160.5Z" fill="url(#gJ)"/>
<path d="M505.7 160.5C507.5 158.6 511.6 155.6 514.8 153.4C518.0 151.2 522.1 149.3 525.0 147.3C527.9 145.3 530.3 142.9 532.0 141.2C533.7 139.5 533.2 137.9 535.1 137.1C537.0 136.2 540.2 136.1 543.2 136.1C546.2 136.1 550.5 137.1 553.4 137.1C556.3 137.1 559.0 134.7 560.5 136.1C562.0 137.5 561.7 141.7 562.5 145.3C563.3 149.0 564.2 153.1 565.5 158.0C566.8 162.9 569.9 169.3 570.0 175.0C570.1 180.7 570.5 190.2 566.0 192.0C561.5 193.8 550.4 188.0 543.2 186.0C536.0 184.0 528.3 181.2 522.9 179.8C517.5 178.4 513.6 179.1 510.7 177.7C507.8 176.3 506.8 173.7 505.7 171.6C504.6 169.5 504.2 166.8 504.2 165.0C504.2 163.2 503.9 162.4 505.7 160.5Z" fill="none" stroke="#e0a0b0" stroke-width="1" opacity="0.4" filter="url(#b1)"/>
<linearGradient id="gRim" gradientUnits="userSpaceOnUse" x1="516" y1="150" x2="526" y2="162"><stop offset="0" stop-color="#d85682"/><stop offset="1" stop-color="#eb9ab2"/></linearGradient>
<path d="M504.5 161.5C506.0 158.9 511.4 155.8 514.8 153.4C518.2 151.0 522.1 149.1 525.0 147.0C527.9 144.9 530.2 142.8 532.0 141.0C533.8 139.2 534.0 136.8 535.5 136.3C537.0 135.8 540.2 136.4 541.0 138.0C541.8 139.6 541.5 143.3 540.5 146.0C539.5 148.7 537.6 151.6 535.0 154.0C532.4 156.4 528.7 158.5 525.0 160.5C521.3 162.5 516.2 164.6 513.0 166.0C509.8 167.4 507.4 169.8 506.0 169.0C504.6 168.2 503.0 164.1 504.5 161.5Z" fill="url(#gRim)" filter="url(#b0)"/>
<path d="M536 137.500Q548 134 561 136.500" stroke="#e4799a" stroke-width="1.300" fill="none" filter="url(#b0)"/>
<path d="M506 166Q505 172 511 177.500" stroke="#e88aa8" stroke-width="1.500" fill="none" filter="url(#b0)"/>
<g filter="url(#b3)"><circle cx="588.7" cy="221.1" r="68" fill="#f5f0d2" opacity=".8"/></g>
<circle cx="588.7" cy="221.1" r="60" fill="#f5f1da" filter="url(#b2)"/>
<g filter="url(#b0)" stroke-linecap="round">
<circle cx="588.7" cy="221.1" r="42" fill="none" stroke="#dca03a" stroke-width="14" stroke-dasharray="3 1.500" opacity=".5"/>
<path d="M595.3 188.8L597.1 158.1" stroke="#d8922a" stroke-width="2.7"/>
<path d="M594.7 188.7L603.0 156.6" stroke="#f2c04a" stroke-width="2.5"/>
<path d="M593.6 188.5L598.1 162.9" stroke="#e6a630" stroke-width="2.4"/>
<path d="M593.1 188.4L595.3 158.9" stroke="#d8922a" stroke-width="2.5"/>
<path d="M592.2 188.3L594.6 155.0" stroke="#eeb43c" stroke-width="2.4"/>
<path d="M591.4 188.2L593.2 160.0" stroke="#d8922a" stroke-width="2.7"/>
<path d="M590.8 188.2L599.3 157.6" stroke="#f2c04a" stroke-width="2.5"/>
<path d="M590.1 188.1L591.4 157.6" stroke="#e6a630" stroke-width="2.5"/>
<path d="M589.4 188.1L590.4 160.8" stroke="#e6a630" stroke-width="2.3"/>
<path d="M588.3 188.1L586.4 159.3" stroke="#e6a630" stroke-width="2.7"/>
<path d="M588.1 188.1L583.6 161.2" stroke="#f2c04a" stroke-width="2.3"/>
<path d="M587.0 188.1L588.1 161.1" stroke="#e09a2a" stroke-width="2.2"/>
<path d="M586.4 188.2L592.4 163.1" stroke="#eeb43c" stroke-width="2.1"/>
<path d="M585.8 188.2L578.6 163.4" stroke="#f2c04a" stroke-width="2.1"/>
<path d="M584.7 188.3L578.7 159.4" stroke="#eeb43c" stroke-width="2.3"/>
<path d="M584.1 188.4L573.6 161.0" stroke="#eeb43c" stroke-width="1.9"/>
<path d="M583.1 188.6L590.9 153.4" stroke="#e6a630" stroke-width="2.1"/>
<path d="M582.6 188.7L585.3 154.6" stroke="#d8922a" stroke-width="2.0"/>
<path d="M581.5 188.9L576.0 162.3" stroke="#e09a2a" stroke-width="2.6"/>
<path d="M581.1 189.0L568.5 165.9" stroke="#eeb43c" stroke-width="2.4"/>
<path d="M580.5 189.1L576.1 158.3" stroke="#d8922a" stroke-width="2.3"/>
<path d="M579.6 189.4L566.7 158.2" stroke="#eeb43c" stroke-width="2.5"/>
<path d="M579.0 189.6L576.0 162.2" stroke="#eeb43c" stroke-width="2.6"/>
<path d="M577.9 189.9L573.2 163.2" stroke="#f2c04a" stroke-width="2.7"/>
<path d="M577.4 190.1L566.5 163.0" stroke="#e09a2a" stroke-width="2.1"/>
<path d="M576.6 190.4L565.9 165.0" stroke="#d8922a" stroke-width="2.3"/>
<path d="M615.9 202.4L637.8 184.6" stroke="#f2c04a" stroke-width="2.4"/>
<path d="M615.3 201.6L635.1 187.4" stroke="#e09a2a" stroke-width="2.1"/>
<path d="M614.8 200.9L632.9 182.1" stroke="#eeb43c" stroke-width="2.0"/>
<path d="M614.6 200.7L630.4 186.1" stroke="#d8922a" stroke-width="2.8"/>
<path d="M614.2 200.1L630.4 190.7" stroke="#d8922a" stroke-width="2.4"/>
<path d="M613.6 199.5L626.1 187.3" stroke="#e6a630" stroke-width="2.3"/>
<path d="M613.0 198.8L624.8 181.3" stroke="#e6a630" stroke-width="2.3"/>
<path d="M612.3 198.1L626.5 182.8" stroke="#e6a630" stroke-width="2.0"/>
<path d="M611.9 197.6L625.9 175.5" stroke="#eeb43c" stroke-width="2.6"/>
<path d="M611.1 196.9L628.1 183.9" stroke="#f2c04a" stroke-width="2.7"/>
<path d="M610.6 196.4L623.7 178.6" stroke="#d8922a" stroke-width="1.9"/>
<path d="M610.1 196.0L629.3 184.7" stroke="#e6a630" stroke-width="2.4"/>
<path d="M609.7 195.7L618.7 171.9" stroke="#e09a2a" stroke-width="2.2"/>
<path d="M608.8 194.9L623.7 176.1" stroke="#f2c04a" stroke-width="2.3"/>
<path d="M608.3 194.5L624.7 177.9" stroke="#e6a630" stroke-width="2.3"/>
<path d="M607.8 194.2L622.8 173.7" stroke="#f2c04a" stroke-width="2.6"/>
<path d="M606.9 193.6L617.1 173.0" stroke="#eeb43c" stroke-width="2.5"/>
<path d="M606.5 193.3L618.6 178.5" stroke="#e09a2a" stroke-width="2.5"/>
<path d="M605.7 192.8L622.5 170.7" stroke="#eeb43c" stroke-width="2.5"/>
<path d="M604.9 192.3L612.8 167.2" stroke="#eeb43c" stroke-width="2.7"/>
<path d="M604.4 192.1L616.6 171.4" stroke="#f2c04a" stroke-width="2.2"/>
<path d="M603.4 191.6L609.7 175.2" stroke="#e6a630" stroke-width="2.8"/>
<path d="M603.1 191.4L613.8 175.5" stroke="#eeb43c" stroke-width="2.6"/>
<path d="M602.3 191.0L611.0 169.5" stroke="#e09a2a" stroke-width="2.5"/>
<path d="M601.3 190.6L613.7 169.3" stroke="#e09a2a" stroke-width="2.7"/>
<path d="M601.1 190.5L604.1 164.7" stroke="#d8922a" stroke-width="2.2"/>
<path d="M600.0 190.1L610.5 168.7" stroke="#eeb43c" stroke-width="1.9"/>
<path d="M599.1 189.8L608.2 172.0" stroke="#eeb43c" stroke-width="2.6"/>
<path d="M618.7 234.9L640.0 240.7" stroke="#e09a2a" stroke-width="2.8"/>
<path d="M618.9 234.3L640.8 240.6" stroke="#f2c04a" stroke-width="2.1"/>
<path d="M619.3 233.5L643.9 244.7" stroke="#eeb43c" stroke-width="2.1"/>
<path d="M619.5 232.9L644.2 242.7" stroke="#d8922a" stroke-width="2.4"/>
<path d="M620.0 231.7L642.1 235.5" stroke="#eeb43c" stroke-width="2.0"/>
<path d="M620.2 230.9L644.0 243.7" stroke="#eeb43c" stroke-width="2.3"/>
<path d="M620.3 230.5L648.6 233.3" stroke="#d8922a" stroke-width="2.6"/>
<path d="M620.7 229.2L644.7 235.0" stroke="#eeb43c" stroke-width="2.0"/>
<path d="M620.9 228.4L648.0 232.5" stroke="#eeb43c" stroke-width="2.7"/>
<path d="M621.1 227.4L649.2 233.9" stroke="#d8922a" stroke-width="2.8"/>
<path d="M621.2 226.6L644.0 230.6" stroke="#d8922a" stroke-width="2.0"/>
<path d="M621.3 226.1L646.3 230.6" stroke="#e09a2a" stroke-width="2.3"/>
<path d="M621.4 225.5L649.2 222.2" stroke="#eeb43c" stroke-width="2.4"/>
<path d="M621.6 224.1L650.0 223.7" stroke="#f2c04a" stroke-width="2.0"/>
<path d="M621.6 223.4L648.5 221.8" stroke="#f2c04a" stroke-width="2.4"/>
<path d="M621.7 222.4L648.3 228.8" stroke="#f2c04a" stroke-width="2.4"/>
<path d="M621.7 221.8L648.4 225.6" stroke="#d8922a" stroke-width="2.1"/>
<path d="M621.7 220.6L650.3 224.2" stroke="#d8922a" stroke-width="2.1"/>
<path d="M621.7 219.6L650.4 223.9" stroke="#eeb43c" stroke-width="2.3"/>
<path d="M621.6 219.3L642.7 218.8" stroke="#f2c04a" stroke-width="1.9"/>
<path d="M621.5 217.8L646.8 221.2" stroke="#d8922a" stroke-width="2.0"/>
<path d="M621.5 217.5L643.1 211.1" stroke="#d8922a" stroke-width="2.3"/>
<path d="M621.3 216.1L648.7 214.5" stroke="#f2c04a" stroke-width="2.0"/>
<path d="M621.2 215.5L648.0 209.1" stroke="#f2c04a" stroke-width="2.4"/>
<path d="M621.1 214.9L644.4 207.3" stroke="#e6a630" stroke-width="1.9"/>
<path d="M620.9 214.0L641.4 208.9" stroke="#e09a2a" stroke-width="2.2"/>
<path d="M620.7 213.0L644.3 201.6" stroke="#e6a630" stroke-width="2.7"/>
<path d="M620.4 212.0L644.8 200.6" stroke="#d8922a" stroke-width="2.7"/>
<path d="M620.3 211.5L644.4 201.5" stroke="#d8922a" stroke-width="2.1"/>
<path d="M619.9 210.3L646.0 206.6" stroke="#d8922a" stroke-width="2.1"/>
<path d="M619.6 209.5L641.3 195.0" stroke="#e09a2a" stroke-width="2.7"/>
<path d="M619.3 208.8L638.4 194.1" stroke="#eeb43c" stroke-width="2.1"/>
<path d="M618.8 207.6L643.6 194.2" stroke="#e6a630" stroke-width="2.1"/>
<path d="M618.7 207.4L642.8 193.8" stroke="#f2c04a" stroke-width="2.4"/>
<path d="M600.5 251.9L601.4 265.5" stroke="#e6a630" stroke-width="2.1"/>
<path d="M601.3 251.6L604.7 272.7" stroke="#e09a2a" stroke-width="2.0"/>
<path d="M602.0 251.3L604.5 271.0" stroke="#eeb43c" stroke-width="2.6"/>
<path d="M602.8 251.0L607.5 261.2" stroke="#d8922a" stroke-width="2.5"/>
<path d="M603.8 250.4L611.8 264.6" stroke="#eeb43c" stroke-width="2.7"/>
<path d="M604.7 250.0L616.4 267.7" stroke="#e6a630" stroke-width="2.4"/>
<path d="M604.9 249.9L615.2 265.2" stroke="#f2c04a" stroke-width="2.3"/>
<path d="M605.9 249.3L614.7 262.3" stroke="#d8922a" stroke-width="2.2"/>
<path d="M606.7 248.7L613.8 257.8" stroke="#e09a2a" stroke-width="2.6"/>
<path d="M607.3 248.3L617.3 257.3" stroke="#eeb43c" stroke-width="2.0"/>
<path d="M608.3 247.7L621.1 255.9" stroke="#f2c04a" stroke-width="2.4"/>
<path d="M608.6 247.4L621.8 259.1" stroke="#e09a2a" stroke-width="2.6"/>
<path d="M609.4 246.8L622.4 263.4" stroke="#f2c04a" stroke-width="2.0"/>
<path d="M610.1 246.2L616.2 262.7" stroke="#e09a2a" stroke-width="2.6"/>
<path d="M611.0 245.4L621.3 257.0" stroke="#e09a2a" stroke-width="2.2"/>
<path d="M611.3 245.2L624.5 261.2" stroke="#d8922a" stroke-width="1.9"/>
<path d="M612.0 244.5L626.7 260.3" stroke="#f2c04a" stroke-width="2.4"/>
<path d="M612.8 243.7L625.4 252.5" stroke="#f2c04a" stroke-width="2.5"/>
<path d="M613.4 242.9L628.5 255.2" stroke="#d8922a" stroke-width="2.0"/>
<path d="M613.8 242.5L625.8 252.9" stroke="#d8922a" stroke-width="1.9"/>
<path d="M614.3 241.9L627.4 249.7" stroke="#e09a2a" stroke-width="2.4"/>
<path d="M615.0 241.0L633.3 252.7" stroke="#d8922a" stroke-width="2.7"/>
<path d="M615.4 240.5L626.6 252.0" stroke="#e6a630" stroke-width="2.2"/>
<path d="M616.2 239.3L627.0 250.4" stroke="#eeb43c" stroke-width="2.7"/>
<path d="M616.6 238.8L629.3 251.3" stroke="#e09a2a" stroke-width="2.4"/>
<path d="M617.0 238.0L630.8 244.2" stroke="#e09a2a" stroke-width="2.3"/>
<path d="M574.4 250.8L563.8 265.9" stroke="#e6a630" stroke-width="1.9"/>
<path d="M575.2 251.2L567.6 257.9" stroke="#eeb43c" stroke-width="2.3"/>
<path d="M576.4 251.7L571.8 260.1" stroke="#d8922a" stroke-width="2.8"/>
<path d="M577.4 252.1L576.8 262.1" stroke="#eeb43c" stroke-width="2.3"/>
<path d="M578.0 252.3L572.1 270.1" stroke="#f2c04a" stroke-width="2.0"/>
<path d="M579.2 252.7L579.6 264.6" stroke="#e6a630" stroke-width="1.9"/>
<path d="M579.7 252.9L578.7 263.1" stroke="#eeb43c" stroke-width="2.0"/>
<path d="M580.6 253.1L574.5 267.7" stroke="#f2c04a" stroke-width="2.4"/>
<path d="M581.7 253.3L574.8 267.9" stroke="#eeb43c" stroke-width="2.8"/>
<path d="M582.7 253.5L584.4 265.3" stroke="#e6a630" stroke-width="2.4"/>
<path d="M583.3 253.7L582.5 267.8" stroke="#d8922a" stroke-width="2.5"/>
<path d="M584.4 253.8L580.3 268.3" stroke="#e09a2a" stroke-width="2.6"/>
<path d="M585.0 253.9L590.6 265.5" stroke="#e6a630" stroke-width="2.5"/>
<path d="M585.8 254.0L583.9 265.4" stroke="#e6a630" stroke-width="2.5"/>
<path d="M586.8 254.0L587.3 268.5" stroke="#eeb43c" stroke-width="2.4"/>
<path d="M588.2 254.1L588.5 266.8" stroke="#f2c04a" stroke-width="2.2"/>
<path d="M588.9 254.1L593.4 267.8" stroke="#e6a630" stroke-width="2.3"/>
<path d="M590.2 254.1L596.2 270.9" stroke="#eeb43c" stroke-width="2.3"/>
<path d="M591.0 254.0L593.0 266.8" stroke="#d8922a" stroke-width="2.2"/>
<path d="M591.8 254.0L595.0 270.2" stroke="#eeb43c" stroke-width="2.3"/>
<path d="M592.6 253.9L594.6 263.7" stroke="#e6a630" stroke-width="2.3"/>
<path d="M593.7 253.7L595.3 270.8" stroke="#f2c04a" stroke-width="2.2"/>
<path d="M594.7 253.5L597.5 262.9" stroke="#e6a630" stroke-width="2.5"/>
<path d="M595.4 253.4L603.7 268.4" stroke="#e09a2a" stroke-width="2.2"/>
<path d="M596.1 253.3L598.5 265.6" stroke="#e6a630" stroke-width="2.2"/>
<path d="M597.2 253.0L598.0 268.1" stroke="#e09a2a" stroke-width="2.3"/>
<path d="M557.5 231.8L539.4 236.5" stroke="#d8922a" stroke-width="2.1"/>
<path d="M557.7 232.4L540.7 242.1" stroke="#e09a2a" stroke-width="2.5"/>
<path d="M558.0 233.3L535.1 242.1" stroke="#f2c04a" stroke-width="2.4"/>
<path d="M558.4 234.3L537.1 239.5" stroke="#eeb43c" stroke-width="2.0"/>
<path d="M558.7 234.8L536.2 246.3" stroke="#e6a630" stroke-width="2.4"/>
<path d="M559.1 235.7L534.1 244.9" stroke="#f2c04a" stroke-width="2.0"/>
<path d="M559.5 236.4L538.5 249.0" stroke="#e6a630" stroke-width="2.7"/>
<path d="M559.7 236.9L540.3 248.4" stroke="#eeb43c" stroke-width="2.0"/>
<path d="M560.4 238.1L542.7 247.5" stroke="#d8922a" stroke-width="2.2"/>
<path d="M560.7 238.6L542.4 245.2" stroke="#e09a2a" stroke-width="2.5"/>
<path d="M561.2 239.4L542.8 250.3" stroke="#e6a630" stroke-width="2.3"/>
<path d="M561.8 240.3L539.9 248.5" stroke="#e6a630" stroke-width="2.6"/>
<path d="M562.3 241.0L545.5 260.7" stroke="#d8922a" stroke-width="2.2"/>
<path d="M562.5 241.2L548.8 250.1" stroke="#f2c04a" stroke-width="2.7"/>
<path d="M563.2 242.0L547.9 250.0" stroke="#e09a2a" stroke-width="2.1"/>
<path d="M563.8 242.8L547.3 251.7" stroke="#e6a630" stroke-width="2.3"/>
<path d="M564.5 243.6L554.1 259.4" stroke="#e6a630" stroke-width="2.6"/>
<path d="M564.8 243.8L554.8 262.9" stroke="#e6a630" stroke-width="2.2"/>
<path d="M565.5 244.5L549.0 255.2" stroke="#f2c04a" stroke-width="2.4"/>
<path d="M566.1 245.1L552.5 255.9" stroke="#e09a2a" stroke-width="2.3"/>
<path d="M567.1 246.0L545.0 261.1" stroke="#d8922a" stroke-width="2.3"/>
<path d="M567.4 246.3L545.8 261.1" stroke="#e09a2a" stroke-width="2.5"/>
<path d="M568.3 247.1L560.2 261.1" stroke="#eeb43c" stroke-width="2.8"/>
<path d="M569.1 247.6L555.2 261.6" stroke="#d8922a" stroke-width="2.6"/>
<path d="M569.7 248.1L563.0 272.5" stroke="#e6a630" stroke-width="2.7"/>
<path d="M570.5 248.6L561.9 267.3" stroke="#eeb43c" stroke-width="2.5"/>
<path d="M571.1 249.0L563.5 264.2" stroke="#e09a2a" stroke-width="2.7"/>
<path d="M571.9 249.5L565.7 265.0" stroke="#d8922a" stroke-width="2.1"/>
<path d="M559.9 204.9L542.0 194.9" stroke="#eeb43c" stroke-width="2.6"/>
<path d="M559.7 205.4L540.7 194.9" stroke="#d8922a" stroke-width="2.0"/>
<path d="M559.1 206.5L535.9 200.6" stroke="#d8922a" stroke-width="2.2"/>
<path d="M558.7 207.4L538.2 196.6" stroke="#e6a630" stroke-width="2.6"/>
<path d="M558.4 208.0L542.2 197.1" stroke="#e09a2a" stroke-width="2.2"/>
<path d="M558.1 208.8L534.4 201.9" stroke="#f2c04a" stroke-width="2.5"/>
<path d="M557.8 209.4L538.3 205.7" stroke="#f2c04a" stroke-width="2.6"/>
<path d="M557.4 210.7L537.0 208.5" stroke="#f2c04a" stroke-width="1.9"/>
<path d="M557.2 211.3L532.2 203.9" stroke="#f2c04a" stroke-width="2.6"/>
<path d="M556.9 212.5L529.2 210.6" stroke="#eeb43c" stroke-width="2.7"/>
<path d="M556.8 212.8L531.0 212.6" stroke="#e09a2a" stroke-width="2.6"/>
<path d="M556.5 214.0L537.6 207.4" stroke="#eeb43c" stroke-width="2.1"/>
<path d="M556.3 214.9L533.7 215.4" stroke="#e09a2a" stroke-width="2.3"/>
<path d="M556.2 215.6L536.7 210.6" stroke="#d8922a" stroke-width="2.0"/>
<path d="M556.0 216.6L529.9 214.9" stroke="#f2c04a" stroke-width="2.4"/>
<path d="M555.9 217.1L534.5 218.0" stroke="#eeb43c" stroke-width="2.8"/>
<path d="M555.8 218.2L529.7 211.7" stroke="#d8922a" stroke-width="2.0"/>
<path d="M555.8 218.9L535.3 223.4" stroke="#f2c04a" stroke-width="2.3"/>
<path d="M555.7 220.3L530.5 218.9" stroke="#e09a2a" stroke-width="2.8"/>
<path d="M555.7 221.1L530.4 215.6" stroke="#d8922a" stroke-width="2.4"/>
<path d="M555.7 221.6L534.8 220.5" stroke="#d8922a" stroke-width="2.2"/>
<path d="M555.7 222.7L529.2 228.2" stroke="#e6a630" stroke-width="2.5"/>
<path d="M555.8 223.3L529.6 229.4" stroke="#e09a2a" stroke-width="2.5"/>
<path d="M555.9 224.4L531.0 224.0" stroke="#eeb43c" stroke-width="2.8"/>
<path d="M556.0 225.3L530.2 230.0" stroke="#e6a630" stroke-width="2.5"/>
<path d="M556.1 226.0L536.2 226.8" stroke="#eeb43c" stroke-width="2.3"/>
<path d="M556.2 227.0L535.8 237.4" stroke="#e09a2a" stroke-width="2.3"/>
<path d="M556.4 227.6L529.3 238.0" stroke="#eeb43c" stroke-width="2.1"/>
<path d="M556.6 228.8L535.3 242.3" stroke="#eeb43c" stroke-width="2.7"/>
<path d="M556.9 230.0L531.8 240.7" stroke="#d8922a" stroke-width="2.0"/>
<path d="M557.1 230.8L538.6 235.0" stroke="#d8922a" stroke-width="2.2"/>
<path d="M557.2 231.1L532.5 235.2" stroke="#e6a630" stroke-width="2.3"/>
<path d="M557.6 232.1L538.4 253.5" stroke="#eeb43c" stroke-width="2.2"/>
<path d="M558.0 233.1L531.4 236.5" stroke="#f2c04a" stroke-width="2.5"/>
<path d="M572.3 192.5L562.9 179.8" stroke="#e6a630" stroke-width="2.0"/>
<path d="M570.9 193.3L561.7 183.9" stroke="#eeb43c" stroke-width="2.2"/>
<path d="M569.6 194.2L564.0 187.8" stroke="#e6a630" stroke-width="2.5"/>
<path d="M567.2 196.1L560.6 187.7" stroke="#f2c04a" stroke-width="2.4"/>
<path d="M566.1 197.1L561.2 187.1" stroke="#f2c04a" stroke-width="2.6"/>
<path d="M564.6 198.5L553.6 182.9" stroke="#f2c04a" stroke-width="2.6"/>
<path d="M563.7 199.6L557.2 197.1" stroke="#d8922a" stroke-width="2.3"/>
<path d="M561.7 202.2L554.5 195.9" stroke="#e6a630" stroke-width="2.2"/>
<g fill="#f8f0d6">
<circle cx="597.1" cy="158.1" r="1.100"/>
<circle cx="603.0" cy="156.6" r="1.100"/>
<circle cx="598.1" cy="162.9" r="1.100"/>
<circle cx="595.3" cy="158.9" r="1.100"/>
<circle cx="594.6" cy="155.0" r="1.100"/>
<circle cx="593.2" cy="160.0" r="1.100"/>
<circle cx="599.3" cy="157.6" r="1.100"/>
<circle cx="591.4" cy="157.6" r="1.100"/>
<circle cx="590.4" cy="160.8" r="1.100"/>
<circle cx="586.4" cy="159.3" r="1.100"/>
<circle cx="583.6" cy="161.2" r="1.100"/>
<circle cx="588.1" cy="161.1" r="1.100"/>
<circle cx="592.4" cy="163.1" r="1.100"/>
<circle cx="578.6" cy="163.4" r="1.100"/>
<circle cx="578.7" cy="159.4" r="1.100"/>
<circle cx="573.6" cy="161.0" r="1.100"/>
<circle cx="590.9" cy="153.4" r="1.100"/>
<circle cx="585.3" cy="154.6" r="1.100"/>
<circle cx="576.0" cy="162.3" r="1.100"/>
<circle cx="568.5" cy="165.9" r="1.100"/>
<circle cx="576.1" cy="158.3" r="1.100"/>
<circle cx="566.7" cy="158.2" r="1.100"/>
<circle cx="576.0" cy="162.2" r="1.100"/>
<circle cx="573.2" cy="163.2" r="1.100"/>
<circle cx="566.5" cy="163.0" r="1.100"/>
<circle cx="565.9" cy="165.0" r="1.100"/>
<circle cx="637.8" cy="184.6" r="1.100"/>
<circle cx="635.1" cy="187.4" r="1.100"/>
<circle cx="632.9" cy="182.1" r="1.100"/>
<circle cx="630.4" cy="186.1" r="1.100"/>
<circle cx="630.4" cy="190.7" r="1.100"/>
<circle cx="626.1" cy="187.3" r="1.100"/>
<circle cx="624.8" cy="181.3" r="1.100"/>
<circle cx="626.5" cy="182.8" r="1.100"/>
<circle cx="625.9" cy="175.5" r="1.100"/>
<circle cx="628.1" cy="183.9" r="1.100"/>
<circle cx="623.7" cy="178.6" r="1.100"/>
<circle cx="629.3" cy="184.7" r="1.100"/>
<circle cx="618.7" cy="171.9" r="1.100"/>
<circle cx="623.7" cy="176.1" r="1.100"/>
<circle cx="624.7" cy="177.9" r="1.100"/>
<circle cx="622.8" cy="173.7" r="1.100"/>
<circle cx="617.1" cy="173.0" r="1.100"/>
<circle cx="618.6" cy="178.5" r="1.100"/>
<circle cx="622.5" cy="170.7" r="1.100"/>
<circle cx="612.8" cy="167.2" r="1.100"/>
<circle cx="616.6" cy="171.4" r="1.100"/>
<circle cx="609.7" cy="175.2" r="1.100"/>
<circle cx="613.8" cy="175.5" r="1.100"/>
<circle cx="611.0" cy="169.5" r="1.100"/>
<circle cx="613.7" cy="169.3" r="1.100"/>
<circle cx="604.1" cy="164.7" r="1.100"/>
<circle cx="610.5" cy="168.7" r="1.100"/>
<circle cx="608.2" cy="172.0" r="1.100"/>
<circle cx="640.0" cy="240.7" r="1.100"/>
<circle cx="640.8" cy="240.6" r="1.100"/>
<circle cx="643.9" cy="244.7" r="1.100"/>
<circle cx="644.2" cy="242.7" r="1.100"/>
<circle cx="642.1" cy="235.5" r="1.100"/>
<circle cx="644.0" cy="243.7" r="1.100"/>
<circle cx="648.6" cy="233.3" r="1.100"/>
<circle cx="644.7" cy="235.0" r="1.100"/>
<circle cx="648.0" cy="232.5" r="1.100"/>
<circle cx="649.2" cy="233.9" r="1.100"/>
<circle cx="644.0" cy="230.6" r="1.100"/>
<circle cx="646.3" cy="230.6" r="1.100"/>
<circle cx="649.2" cy="222.2" r="1.100"/>
<circle cx="650.0" cy="223.7" r="1.100"/>
<circle cx="648.5" cy="221.8" r="1.100"/>
<circle cx="648.3" cy="228.8" r="1.100"/>
<circle cx="648.4" cy="225.6" r="1.100"/>
<circle cx="650.3" cy="224.2" r="1.100"/>
<circle cx="650.4" cy="223.9" r="1.100"/>
<circle cx="642.7" cy="218.8" r="1.100"/>
<circle cx="646.8" cy="221.2" r="1.100"/>
<circle cx="643.1" cy="211.1" r="1.100"/>
<circle cx="648.7" cy="214.5" r="1.100"/>
<circle cx="648.0" cy="209.1" r="1.100"/>
<circle cx="644.4" cy="207.3" r="1.100"/>
<circle cx="641.4" cy="208.9" r="1.100"/>
<circle cx="644.3" cy="201.6" r="1.100"/>
<circle cx="644.8" cy="200.6" r="1.100"/>
<circle cx="644.4" cy="201.5" r="1.100"/>
<circle cx="646.0" cy="206.6" r="1.100"/>
<circle cx="641.3" cy="195.0" r="1.100"/>
<circle cx="638.4" cy="194.1" r="1.100"/>
<circle cx="643.6" cy="194.2" r="1.100"/>
<circle cx="642.8" cy="193.8" r="1.100"/>
<circle cx="601.4" cy="265.5" r="1.100"/>
<circle cx="604.7" cy="272.7" r="1.100"/>
<circle cx="604.5" cy="271.0" r="1.100"/>
<circle cx="607.5" cy="261.2" r="1.100"/>
<circle cx="611.8" cy="264.6" r="1.100"/>
<circle cx="616.4" cy="267.7" r="1.100"/>
<circle cx="615.2" cy="265.2" r="1.100"/>
<circle cx="614.7" cy="262.3" r="1.100"/>
<circle cx="613.8" cy="257.8" r="1.100"/>
<circle cx="617.3" cy="257.3" r="1.100"/>
<circle cx="621.1" cy="255.9" r="1.100"/>
<circle cx="621.8" cy="259.1" r="1.100"/>
<circle cx="622.4" cy="263.4" r="1.100"/>
<circle cx="616.2" cy="262.7" r="1.100"/>
<circle cx="621.3" cy="257.0" r="1.100"/>
<circle cx="624.5" cy="261.2" r="1.100"/>
<circle cx="626.7" cy="260.3" r="1.100"/>
<circle cx="625.4" cy="252.5" r="1.100"/>
<circle cx="628.5" cy="255.2" r="1.100"/>
<circle cx="625.8" cy="252.9" r="1.100"/>
<circle cx="627.4" cy="249.7" r="1.100"/>
<circle cx="633.3" cy="252.7" r="1.100"/>
<circle cx="626.6" cy="252.0" r="1.100"/>
<circle cx="627.0" cy="250.4" r="1.100"/>
<circle cx="629.3" cy="251.3" r="1.100"/>
<circle cx="630.8" cy="244.2" r="1.100"/>
<circle cx="563.8" cy="265.9" r="1.100"/>
<circle cx="567.6" cy="257.9" r="1.100"/>
<circle cx="571.8" cy="260.1" r="1.100"/>
<circle cx="576.8" cy="262.1" r="1.100"/>
<circle cx="572.1" cy="270.1" r="1.100"/>
<circle cx="579.6" cy="264.6" r="1.100"/>
<circle cx="578.7" cy="263.1" r="1.100"/>
<circle cx="574.5" cy="267.7" r="1.100"/>
<circle cx="574.8" cy="267.9" r="1.100"/>
<circle cx="584.4" cy="265.3" r="1.100"/>
<circle cx="582.5" cy="267.8" r="1.100"/>
<circle cx="580.3" cy="268.3" r="1.100"/>
<circle cx="590.6" cy="265.5" r="1.100"/>
<circle cx="583.9" cy="265.4" r="1.100"/>
<circle cx="587.3" cy="268.5" r="1.100"/>
<circle cx="588.5" cy="266.8" r="1.100"/>
<circle cx="593.4" cy="267.8" r="1.100"/>
<circle cx="596.2" cy="270.9" r="1.100"/>
<circle cx="593.0" cy="266.8" r="1.100"/>
<circle cx="595.0" cy="270.2" r="1.100"/>
<circle cx="594.6" cy="263.7" r="1.100"/>
<circle cx="595.3" cy="270.8" r="1.100"/>
<circle cx="597.5" cy="262.9" r="1.100"/>
<circle cx="603.7" cy="268.4" r="1.100"/>
<circle cx="598.5" cy="265.6" r="1.100"/>
<circle cx="598.0" cy="268.1" r="1.100"/>
<circle cx="539.4" cy="236.5" r="1.100"/>
<circle cx="540.7" cy="242.1" r="1.100"/>
<circle cx="535.1" cy="242.1" r="1.100"/>
<circle cx="537.1" cy="239.5" r="1.100"/>
<circle cx="536.2" cy="246.3" r="1.100"/>
<circle cx="534.1" cy="244.9" r="1.100"/>
<circle cx="538.5" cy="249.0" r="1.100"/>
<circle cx="540.3" cy="248.4" r="1.100"/>
<circle cx="542.7" cy="247.5" r="1.100"/>
<circle cx="542.4" cy="245.2" r="1.100"/>
<circle cx="542.8" cy="250.3" r="1.100"/>
<circle cx="539.9" cy="248.5" r="1.100"/>
<circle cx="545.5" cy="260.7" r="1.100"/>
<circle cx="548.8" cy="250.1" r="1.100"/>
<circle cx="547.9" cy="250.0" r="1.100"/>
<circle cx="547.3" cy="251.7" r="1.100"/>
<circle cx="554.1" cy="259.4" r="1.100"/>
<circle cx="554.8" cy="262.9" r="1.100"/>
<circle cx="549.0" cy="255.2" r="1.100"/>
<circle cx="552.5" cy="255.9" r="1.100"/>
<circle cx="545.0" cy="261.1" r="1.100"/>
<circle cx="545.8" cy="261.1" r="1.100"/>
<circle cx="560.2" cy="261.1" r="1.100"/>
<circle cx="555.2" cy="261.6" r="1.100"/>
<circle cx="563.0" cy="272.5" r="1.100"/>
<circle cx="561.9" cy="267.3" r="1.100"/>
<circle cx="563.5" cy="264.2" r="1.100"/>
<circle cx="565.7" cy="265.0" r="1.100"/>
<circle cx="542.0" cy="194.9" r="1.100"/>
<circle cx="540.7" cy="194.9" r="1.100"/>
<circle cx="535.9" cy="200.6" r="1.100"/>
<circle cx="538.2" cy="196.6" r="1.100"/>
<circle cx="542.2" cy="197.1" r="1.100"/>
<circle cx="534.4" cy="201.9" r="1.100"/>
<circle cx="538.3" cy="205.7" r="1.100"/>
<circle cx="537.0" cy="208.5" r="1.100"/>
<circle cx="532.2" cy="203.9" r="1.100"/>
<circle cx="529.2" cy="210.6" r="1.100"/>
<circle cx="531.0" cy="212.6" r="1.100"/>
<circle cx="537.6" cy="207.4" r="1.100"/>
<circle cx="533.7" cy="215.4" r="1.100"/>
<circle cx="536.7" cy="210.6" r="1.100"/>
<circle cx="529.9" cy="214.9" r="1.100"/>
<circle cx="534.5" cy="218.0" r="1.100"/>
<circle cx="529.7" cy="211.7" r="1.100"/>
<circle cx="535.3" cy="223.4" r="1.100"/>
<circle cx="530.5" cy="218.9" r="1.100"/>
<circle cx="530.4" cy="215.6" r="1.100"/>
<circle cx="534.8" cy="220.5" r="1.100"/>
<circle cx="529.2" cy="228.2" r="1.100"/>
<circle cx="529.6" cy="229.4" r="1.100"/>
<circle cx="531.0" cy="224.0" r="1.100"/>
<circle cx="530.2" cy="230.0" r="1.100"/>
<circle cx="536.2" cy="226.8" r="1.100"/>
<circle cx="535.8" cy="237.4" r="1.100"/>
<circle cx="529.3" cy="238.0" r="1.100"/>
<circle cx="535.3" cy="242.3" r="1.100"/>
<circle cx="531.8" cy="240.7" r="1.100"/>
<circle cx="538.6" cy="235.0" r="1.100"/>
<circle cx="532.5" cy="235.2" r="1.100"/>
<circle cx="538.4" cy="253.5" r="1.100"/>
<circle cx="531.4" cy="236.5" r="1.100"/>
<circle cx="562.9" cy="179.8" r="1.100"/>
<circle cx="561.7" cy="183.9" r="1.100"/>
<circle cx="564.0" cy="187.8" r="1.100"/>
<circle cx="560.6" cy="187.7" r="1.100"/>
<circle cx="561.2" cy="187.1" r="1.100"/>
<circle cx="553.6" cy="182.9" r="1.100"/>
<circle cx="557.2" cy="197.1" r="1.100"/>
<circle cx="554.5" cy="195.9" r="1.100"/>
</g></g>
<circle cx="588.7" cy="221.1" r="36" fill="#f8df4c"/>
<circle cx="588.7" cy="221.1" r="35.300" fill="none" stroke="#e8c030" stroke-width="1.500" opacity=".7"/>
<circle cx="572.2" cy="205.1" r="1.300" fill="#6a4218"/>
<circle cx="584.2" cy="201.1" r="1.300" fill="#6a4218"/>
<circle cx="597.2" cy="201.6" r="1.300" fill="#6a4218"/>
<circle cx="606.7" cy="211.6" r="1.300" fill="#6a4218"/>
<circle cx="566.7" cy="218.1" r="1.300" fill="#6a4218"/>
<circle cx="578.7" cy="216.1" r="1.300" fill="#6a4218"/>
<circle cx="592.7" cy="214.1" r="1.300" fill="#6a4218"/>
<circle cx="611.7" cy="223.1" r="1.300" fill="#6a4218"/>
<circle cx="569.2" cy="230.1" r="1.300" fill="#6a4218"/>
<circle cx="584.7" cy="229.6" r="1.300" fill="#6a4218"/>
<circle cx="598.2" cy="226.6" r="1.300" fill="#6a4218"/>
<circle cx="607.7" cy="235.6" r="1.300" fill="#6a4218"/>
<circle cx="577.7" cy="239.6" r="1.300" fill="#6a4218"/>
<circle cx="587.7" cy="243.1" r="1.300" fill="#6a4218"/>
<circle cx="598.2" cy="242.1" r="1.300" fill="#6a4218"/>
<g fill="#bfe0d0" opacity=".85" filter="url(#b0)">
<ellipse cx="411.1" cy="193.0" rx="0.9" ry="1.03"/>
<ellipse cx="381.2" cy="63.8" rx="0.8" ry="0.92"/>
<ellipse cx="413.0" cy="89.7" rx="0.6" ry="0.69"/>
<ellipse cx="398.0" cy="122.0" rx="0.5" ry="0.57"/>
<ellipse cx="385.1" cy="91.5" rx="2" ry="2.30"/>
<ellipse cx="330.2" cy="118.8" rx="0.9" ry="1.03"/>
<ellipse cx="414.5" cy="166.3" rx="0.8" ry="0.92"/>
<ellipse cx="368.3" cy="116.4" rx="1.5" ry="1.72"/>
<ellipse cx="337.8" cy="145.6" rx="1.5" ry="1.72"/>
<ellipse cx="418.6" cy="80.4" rx="0.8" ry="0.92"/>
<ellipse cx="409.8" cy="182.3" rx="2" ry="2.30"/>
<ellipse cx="379.2" cy="77.7" rx="2" ry="2.30"/>
<ellipse cx="390.4" cy="136.9" rx="0.8" ry="0.92"/>
<ellipse cx="446.2" cy="124.3" rx="0.5" ry="0.57"/>
<ellipse cx="445.5" cy="67.7" rx="0.6" ry="0.69"/>
<ellipse cx="409.5" cy="147.3" rx="0.5" ry="0.57"/>
<ellipse cx="371.2" cy="160.1" rx="2" ry="2.30"/>
<ellipse cx="420.1" cy="197.5" rx="0.6" ry="0.69"/>
<ellipse cx="406.0" cy="107.6" rx="1.5" ry="1.72"/>
<ellipse cx="392.5" cy="90.5" rx="1.5" ry="1.72"/>
<ellipse cx="349.9" cy="103.0" rx="0.8" ry="0.92"/>
<ellipse cx="459.9" cy="167.6" rx="1.5" ry="1.72"/>
<ellipse cx="347.4" cy="106.1" rx="1.5" ry="1.72"/>
<ellipse cx="387.0" cy="109.4" rx="0.5" ry="0.57"/>
<ellipse cx="400.5" cy="92.8" rx="0.6" ry="0.69"/>
<ellipse cx="428.4" cy="194.8" rx="1.2" ry="1.38"/>
<ellipse cx="430.0" cy="139.9" rx="0.8" ry="0.92"/>
<ellipse cx="372.0" cy="106.4" rx="0.7" ry="0.80"/>
<ellipse cx="373.3" cy="187.9" rx="0.5" ry="0.57"/>
<ellipse cx="363.5" cy="120.6" rx="0.7" ry="0.80"/>
<ellipse cx="385.9" cy="178.9" rx="1.5" ry="1.72"/>
<ellipse cx="443.2" cy="147.1" rx="0.8" ry="0.92"/>
<ellipse cx="416.3" cy="126.7" rx="0.8" ry="0.92"/>
<ellipse cx="371.4" cy="128.3" rx="1" ry="1.15"/>
<ellipse cx="443.7" cy="104.8" rx="0.9" ry="1.03"/>
<ellipse cx="405.8" cy="65.9" rx="0.9" ry="1.03"/>
<ellipse cx="365.0" cy="148.2" rx="2" ry="2.30"/>
<ellipse cx="353.4" cy="81.1" rx="1.5" ry="1.72"/>
<ellipse cx="365.1" cy="85.0" rx="0.8" ry="0.92"/>
<ellipse cx="382.7" cy="98.9" rx="1.5" ry="1.72"/>
<ellipse cx="347.3" cy="88.5" rx="1.5" ry="1.72"/>
<ellipse cx="391.0" cy="92.3" rx="1.2" ry="1.38"/>
<ellipse cx="376.5" cy="115.7" rx="0.9" ry="1.03"/>
<ellipse cx="372.5" cy="118.4" rx="0.9" ry="1.03"/>
<ellipse cx="371.7" cy="97.0" rx="1" ry="1.15"/>
<ellipse cx="432.4" cy="180.6" rx="1.2" ry="1.38"/>
<ellipse cx="373.9" cy="90.0" rx="1.2" ry="1.38"/>
<ellipse cx="364.5" cy="98.1" rx="1" ry="1.15"/>
<ellipse cx="360.6" cy="77.4" rx="2" ry="2.30"/>
<ellipse cx="392.1" cy="103.7" rx="2" ry="2.30"/>
<ellipse cx="434.0" cy="76.7" rx="1.2" ry="1.38"/>
<ellipse cx="409.3" cy="93.9" rx="0.9" ry="1.03"/>
<ellipse cx="386.6" cy="182.8" rx="0.8" ry="0.92"/>
<ellipse cx="398.8" cy="180.6" rx="1.2" ry="1.38"/>
<ellipse cx="362.7" cy="90.5" rx="0.7" ry="0.80"/>
<ellipse cx="392.8" cy="69.8" rx="1.2" ry="1.38"/>
<ellipse cx="347.5" cy="76.3" rx="0.9" ry="1.03"/>
<ellipse cx="376.2" cy="112.5" rx="0.7" ry="0.80"/>
<ellipse cx="377.8" cy="137.6" rx="1.2" ry="1.38"/>
<ellipse cx="376.8" cy="93.0" rx="0.6" ry="0.69"/>
<ellipse cx="438.2" cy="108.9" rx="0.7" ry="0.80"/>
<ellipse cx="380.4" cy="185.1" rx="0.9" ry="1.03"/>
<ellipse cx="403.2" cy="105.2" rx="0.8" ry="0.92"/>
<ellipse cx="340.4" cy="120.9" rx="0.9" ry="1.03"/>
<ellipse cx="363.1" cy="105.3" rx="1" ry="1.15"/>
<ellipse cx="332.9" cy="67.9" rx="0.9" ry="1.03"/>
<ellipse cx="431.7" cy="124.5" rx="1.2" ry="1.38"/>
<ellipse cx="375.2" cy="183.8" rx="0.5" ry="0.57"/>
<ellipse cx="351.3" cy="81.7" rx="0.8" ry="0.92"/>
<ellipse cx="336.0" cy="85.9" rx="2" ry="2.30"/>
<ellipse cx="434.8" cy="114.7" rx="1.2" ry="1.38"/>
<ellipse cx="351.3" cy="113.8" rx="0.6" ry="0.69"/>
<ellipse cx="369.4" cy="108.2" rx="2" ry="2.30"/>
<ellipse cx="447.1" cy="162.3" rx="1" ry="1.15"/>
<ellipse cx="418.7" cy="141.1" rx="0.9" ry="1.03"/>
<ellipse cx="389.4" cy="107.0" rx="2" ry="2.30"/>
<ellipse cx="376.0" cy="75.1" rx="0.5" ry="0.57"/>
<ellipse cx="436.1" cy="160.1" rx="1" ry="1.15"/>
<ellipse cx="437.2" cy="140.7" rx="0.7" ry="0.80"/>
<ellipse cx="423.8" cy="104.4" rx="0.5" ry="0.57"/>
<ellipse cx="438.2" cy="106.1" rx="1.5" ry="1.72"/>
<ellipse cx="360.7" cy="158.5" rx="1.2" ry="1.38"/>
<ellipse cx="410.1" cy="91.3" rx="0.5" ry="0.57"/>
<ellipse cx="441.7" cy="169.8" rx="0.9" ry="1.03"/>
<ellipse cx="408.7" cy="128.8" rx="1.5" ry="1.72"/>
<ellipse cx="377.7" cy="147.9" rx="0.7" ry="0.80"/>
<ellipse cx="434.2" cy="91.7" rx="2" ry="2.30"/>
<ellipse cx="396.0" cy="129.5" rx="0.8" ry="0.92"/>
<ellipse cx="342.7" cy="77.9" rx="0.6" ry="0.69"/>
<ellipse cx="330.9" cy="85.1" rx="0.8" ry="0.92"/>
<ellipse cx="415.6" cy="90.3" rx="0.5" ry="0.57"/>
<ellipse cx="448.1" cy="164.1" rx="0.8" ry="0.92"/>
<ellipse cx="418.2" cy="163.4" rx="1" ry="1.15"/>
<ellipse cx="422.2" cy="117.1" rx="1.2" ry="1.38"/>
<ellipse cx="387.0" cy="112.3" rx="1.2" ry="1.38"/>
<ellipse cx="394.9" cy="89.5" rx="1.5" ry="1.72"/>
<ellipse cx="440.5" cy="105.3" rx="1.5" ry="1.72"/>
<ellipse cx="358.0" cy="109.7" rx="0.8" ry="0.92"/>
<ellipse cx="385.1" cy="122.2" rx="0.9" ry="1.03"/>
<ellipse cx="376.2" cy="100.2" rx="0.9" ry="1.03"/>
<ellipse cx="396.2" cy="151.4" rx="0.6" ry="0.69"/>
<ellipse cx="374.7" cy="86.8" rx="1" ry="1.15"/>
<ellipse cx="376.5" cy="101.7" rx="1.5" ry="1.72"/>
<ellipse cx="390.4" cy="142.5" rx="1.2" ry="1.38"/>
<ellipse cx="333.7" cy="125.0" rx="1.2" ry="1.38"/>
<ellipse cx="432.5" cy="64.2" rx="0.9" ry="1.03"/>
<ellipse cx="417.9" cy="170.3" rx="0.5" ry="0.57"/>
<ellipse cx="330.0" cy="104.7" rx="0.6" ry="0.69"/>
<ellipse cx="372.9" cy="120.6" rx="0.7" ry="0.80"/>
<ellipse cx="418.8" cy="188.3" rx="0.8" ry="0.92"/>
<ellipse cx="386.5" cy="98.0" rx="1.5" ry="1.72"/>
<ellipse cx="348.0" cy="84.1" rx="0.6" ry="0.69"/>
<ellipse cx="415.8" cy="143.7" rx="1.2" ry="1.38"/>
<ellipse cx="366.3" cy="122.9" rx="0.5" ry="0.57"/>
<ellipse cx="393.4" cy="157.9" rx="1.2" ry="1.38"/>
<ellipse cx="354.4" cy="129.5" rx="0.7" ry="0.80"/>
<ellipse cx="373.2" cy="171.5" rx="0.9" ry="1.03"/>
<ellipse cx="432.1" cy="87.5" rx="1.2" ry="1.38"/>
<ellipse cx="405.5" cy="144.8" rx="0.7" ry="0.80"/>
<ellipse cx="339.3" cy="86.7" rx="1" ry="1.15"/>
<ellipse cx="421.6" cy="121.3" rx="0.5" ry="0.57"/>
<ellipse cx="386.6" cy="127.1" rx="1" ry="1.15"/>
<ellipse cx="360.4" cy="95.9" rx="1.5" ry="1.72"/>
<ellipse cx="335.1" cy="75.5" rx="1" ry="1.15"/>
<ellipse cx="371.0" cy="177.0" rx="0.9" ry="1.03"/>
<ellipse cx="349.2" cy="65.4" rx="2" ry="2.30"/>
<ellipse cx="340.3" cy="130.6" rx="0.8" ry="0.92"/>
<ellipse cx="466.2" cy="175.9" rx="0.6" ry="0.69"/>
<ellipse cx="427.4" cy="105.3" rx="0.6" ry="0.69"/>
<ellipse cx="437.7" cy="119.4" rx="1" ry="1.15"/>
<ellipse cx="367.5" cy="122.2" rx="2" ry="2.30"/>
<ellipse cx="364.4" cy="75.6" rx="0.7" ry="0.80"/>
<ellipse cx="404.5" cy="76.3" rx="1" ry="1.15"/>
<ellipse cx="412.0" cy="205.6" rx="0.7" ry="0.80"/>
<ellipse cx="433.3" cy="152.0" rx="0.8" ry="0.92"/>
<ellipse cx="378.9" cy="133.2" rx="0.6" ry="0.69"/>
<ellipse cx="475.9" cy="160.3" rx="1.5" ry="1.72"/>
<ellipse cx="370.7" cy="124.8" rx="2" ry="2.30"/>
<ellipse cx="415.9" cy="183.7" rx="1" ry="1.15"/>
<ellipse cx="352.7" cy="96.6" rx="1" ry="1.15"/>
<ellipse cx="379.7" cy="120.4" rx="0.9" ry="1.03"/>
<ellipse cx="336.2" cy="65.8" rx="0.9" ry="1.03"/>
<ellipse cx="428.7" cy="177.0" rx="0.7" ry="0.80"/>
<ellipse cx="391.3" cy="108.7" rx="0.9" ry="1.03"/>
<ellipse cx="348.5" cy="145.3" rx="2" ry="2.30"/>
<ellipse cx="352.9" cy="116.8" rx="2" ry="2.30"/>
<ellipse cx="399.7" cy="99.1" rx="0.6" ry="0.69"/>
<ellipse cx="441.2" cy="122.6" rx="0.8" ry="0.92"/>
<ellipse cx="415.3" cy="68.1" rx="0.5" ry="0.57"/>
<ellipse cx="434.2" cy="193.1" rx="2" ry="2.30"/>
<ellipse cx="419.1" cy="101.4" rx="0.8" ry="0.92"/>
<ellipse cx="418.9" cy="65.8" rx="2" ry="2.30"/>
<ellipse cx="362.5" cy="73.2" rx="2" ry="2.30"/>
<ellipse cx="395.6" cy="122.5" rx="0.5" ry="0.57"/>
<ellipse cx="350.4" cy="109.0" rx="1.2" ry="1.38"/>
<ellipse cx="335.1" cy="112.4" rx="1.2" ry="1.38"/>
<ellipse cx="400.5" cy="202.6" rx="0.8" ry="0.92"/>
<ellipse cx="386.5" cy="77.5" rx="1" ry="1.15"/>
<ellipse cx="421.6" cy="170.3" rx="0.6" ry="0.69"/>
<ellipse cx="366.7" cy="163.7" rx="0.8" ry="0.92"/>
<ellipse cx="355.2" cy="89.3" rx="0.7" ry="0.80"/>
<ellipse cx="362.9" cy="186.2" rx="1.2" ry="1.38"/>
<ellipse cx="406.1" cy="89.2" rx="0.7" ry="0.80"/>
<ellipse cx="375.1" cy="150.4" rx="1" ry="1.15"/>
<ellipse cx="403.3" cy="122.0" rx="0.5" ry="0.57"/>
<ellipse cx="392.7" cy="134.6" rx="1.5" ry="1.72"/>
<ellipse cx="442.7" cy="124.0" rx="1" ry="1.15"/>
<ellipse cx="337.3" cy="108.4" rx="2" ry="2.30"/>
<ellipse cx="380.9" cy="261.1" rx="0.5" ry="0.57"/>
<ellipse cx="428.2" cy="88.4" rx="0.5" ry="0.57"/>
<ellipse cx="405.6" cy="126.1" rx="0.5" ry="0.57"/>
<ellipse cx="425.5" cy="74.1" rx="0.7" ry="0.80"/>
<ellipse cx="404.2" cy="73.6" rx="1" ry="1.15"/>
<ellipse cx="412.6" cy="144.1" rx="2" ry="2.30"/>
<ellipse cx="430.2" cy="168.3" rx="1.5" ry="1.72"/>
<ellipse cx="345.2" cy="65.7" rx="2" ry="2.30"/>
<ellipse cx="437.1" cy="112.7" rx="0.9" ry="1.03"/>
<ellipse cx="361.8" cy="90.7" rx="0.5" ry="0.57"/>
<ellipse cx="438.7" cy="94.7" rx="1" ry="1.15"/>
<ellipse cx="423.7" cy="80.7" rx="0.9" ry="1.03"/>
<ellipse cx="381.1" cy="107.3" rx="1" ry="1.15"/>
<ellipse cx="388.4" cy="118.1" rx="0.6" ry="0.69"/>
<ellipse cx="378.3" cy="79.5" rx="0.9" ry="1.03"/>
<ellipse cx="418.9" cy="199.7" rx="1.5" ry="1.72"/>
<ellipse cx="372.1" cy="98.5" rx="1.5" ry="1.72"/>
<ellipse cx="351.1" cy="103.5" rx="0.6" ry="0.69"/>
<ellipse cx="396.0" cy="93.8" rx="0.5" ry="0.57"/>
<ellipse cx="352.4" cy="73.1" rx="2" ry="2.30"/>
<ellipse cx="369.9" cy="68.3" rx="0.5" ry="0.57"/>
<ellipse cx="372.4" cy="103.4" rx="2" ry="2.30"/>
<ellipse cx="346.1" cy="97.6" rx="0.9" ry="1.03"/>
<ellipse cx="432.8" cy="66.5" rx="0.5" ry="0.57"/>
<ellipse cx="398.1" cy="156.6" rx="0.9" ry="1.03"/>
<ellipse cx="419.1" cy="90.7" rx="0.7" ry="0.80"/>
<ellipse cx="435.2" cy="78.6" rx="1.2" ry="1.38"/>
<ellipse cx="389.5" cy="65.0" rx="0.6" ry="0.69"/>
<ellipse cx="358.9" cy="109.2" rx="1" ry="1.15"/>
<ellipse cx="437.9" cy="108.0" rx="1.2" ry="1.38"/>
<ellipse cx="338.4" cy="80.3" rx="0.8" ry="0.92"/>
<ellipse cx="370.6" cy="146.2" rx="0.5" ry="0.57"/>
<ellipse cx="388.0" cy="190.8" rx="1.5" ry="1.72"/>
<ellipse cx="400.4" cy="169.1" rx="2" ry="2.30"/>
<ellipse cx="425.8" cy="160.6" rx="0.8" ry="0.92"/>
<ellipse cx="388.8" cy="207.2" rx="1.2" ry="1.38"/>
<ellipse cx="366.1" cy="99.4" rx="0.8" ry="0.92"/>
<ellipse cx="354.9" cy="103.8" rx="0.6" ry="0.69"/>
<ellipse cx="419.0" cy="126.8" rx="1.5" ry="1.72"/>
<ellipse cx="369.2" cy="74.8" rx="0.5" ry="0.57"/>
<ellipse cx="364.5" cy="63.8" rx="0.5" ry="0.57"/>
<ellipse cx="354.3" cy="101.1" rx="0.7" ry="0.80"/>
<ellipse cx="332.5" cy="92.2" rx="2" ry="2.30"/>
<ellipse cx="374.0" cy="96.8" rx="0.5" ry="0.57"/>
<ellipse cx="401.4" cy="184.8" rx="0.8" ry="0.92"/>
<ellipse cx="423.1" cy="113.7" rx="0.5" ry="0.57"/>
<ellipse cx="420.3" cy="106.7" rx="1" ry="1.15"/>
<ellipse cx="393.7" cy="85.9" rx="2" ry="2.30"/>
<ellipse cx="363.4" cy="94.6" rx="1" ry="1.15"/>
<ellipse cx="405.4" cy="110.6" rx="1.5" ry="1.72"/>
<ellipse cx="388.7" cy="111.3" rx="0.8" ry="0.92"/>
<ellipse cx="437.9" cy="167.7" rx="0.6" ry="0.69"/>
<ellipse cx="369.4" cy="100.2" rx="1.5" ry="1.72"/>
<ellipse cx="328.8" cy="106.5" rx="0.7" ry="0.80"/>
<ellipse cx="436.4" cy="173.9" rx="0.5" ry="0.57"/>
<ellipse cx="402.6" cy="190.2" rx="1" ry="1.15"/>
<ellipse cx="374.8" cy="89.4" rx="0.7" ry="0.80"/>
<ellipse cx="415.5" cy="152.9" rx="2" ry="2.30"/>
<ellipse cx="435.4" cy="86.1" rx="0.9" ry="1.03"/>
<ellipse cx="381.2" cy="146.3" rx="0.8" ry="0.92"/>
<ellipse cx="375.9" cy="146.8" rx="0.5" ry="0.57"/>
<ellipse cx="429.6" cy="200.9" rx="2" ry="2.30"/>
<ellipse cx="428.3" cy="147.6" rx="1.2" ry="1.38"/>
<ellipse cx="419.8" cy="198.3" rx="0.8" ry="0.92"/>
<ellipse cx="352.4" cy="157.9" rx="2" ry="2.30"/>
<ellipse cx="442.7" cy="175.7" rx="0.6" ry="0.69"/>
<ellipse cx="447.4" cy="167.1" rx="1.2" ry="1.38"/>
<ellipse cx="420.9" cy="173.5" rx="0.6" ry="0.69"/>
<ellipse cx="385.9" cy="97.2" rx="1" ry="1.15"/>
<ellipse cx="422.7" cy="120.4" rx="0.6" ry="0.69"/>
<ellipse cx="370.8" cy="127.5" rx="2" ry="2.30"/>
<ellipse cx="343.0" cy="65.5" rx="0.8" ry="0.92"/>
<ellipse cx="389.5" cy="122.4" rx="1" ry="1.15"/>
<ellipse cx="393.7" cy="87.8" rx="0.9" ry="1.03"/>
<ellipse cx="405.6" cy="116.3" rx="0.7" ry="0.80"/>
<ellipse cx="398.7" cy="136.3" rx="0.9" ry="1.03"/>
<ellipse cx="357.8" cy="81.7" rx="0.6" ry="0.69"/>
<ellipse cx="408.7" cy="159.0" rx="0.7" ry="0.80"/>
<ellipse cx="405.7" cy="105.9" rx="0.8" ry="0.92"/>
<ellipse cx="400.2" cy="150.1" rx="0.5" ry="0.57"/>
<ellipse cx="346.7" cy="103.0" rx="1.2" ry="1.38"/>
<ellipse cx="436.6" cy="73.0" rx="0.7" ry="0.80"/>
<ellipse cx="446.5" cy="167.3" rx="0.7" ry="0.80"/>
<ellipse cx="397.4" cy="97.2" rx="0.5" ry="0.57"/>
<ellipse cx="430.8" cy="195.3" rx="1.2" ry="1.38"/>
<ellipse cx="397.8" cy="86.9" rx="0.7" ry="0.80"/>
<ellipse cx="367.2" cy="124.2" rx="0.5" ry="0.57"/>
<ellipse cx="367.3" cy="104.3" rx="1.2" ry="1.38"/>
<ellipse cx="433.2" cy="117.8" rx="0.6" ry="0.69"/>
<ellipse cx="426.5" cy="111.8" rx="0.7" ry="0.80"/>
<ellipse cx="400.7" cy="71.4" rx="1.2" ry="1.38"/>
<ellipse cx="430.1" cy="205.3" rx="1.5" ry="1.72"/>
<ellipse cx="451.3" cy="184.5" rx="0.6" ry="0.69"/>
<ellipse cx="361.4" cy="78.5" rx="0.9" ry="1.03"/>
<ellipse cx="415.5" cy="116.6" rx="0.5" ry="0.57"/>
<ellipse cx="439.8" cy="76.1" rx="2" ry="2.30"/>
<ellipse cx="429.9" cy="164.7" rx="1" ry="1.15"/>
<ellipse cx="383.8" cy="120.1" rx="1.5" ry="1.72"/>
<ellipse cx="340.2" cy="105.7" rx="0.9" ry="1.03"/>
<ellipse cx="371.0" cy="140.0" rx="1.5" ry="1.72"/>
<ellipse cx="381.6" cy="121.1" rx="0.8" ry="0.92"/>
<ellipse cx="379.8" cy="109.3" rx="0.7" ry="0.80"/>
<ellipse cx="425.3" cy="110.7" rx="1" ry="1.15"/>
<ellipse cx="372.7" cy="69.7" rx="1" ry="1.15"/>
<ellipse cx="398.3" cy="83.9" rx="1.5" ry="1.72"/>
<ellipse cx="389.8" cy="80.1" rx="2" ry="2.30"/>
<ellipse cx="360.5" cy="130.9" rx="1" ry="1.15"/>
<ellipse cx="387.1" cy="94.8" rx="0.9" ry="1.03"/>
<ellipse cx="423.4" cy="122.4" rx="1.5" ry="1.72"/>
<ellipse cx="413.1" cy="83.0" rx="1.2" ry="1.38"/>
<ellipse cx="421.2" cy="167.7" rx="0.6" ry="0.69"/>
<ellipse cx="400.1" cy="123.5" rx="1" ry="1.15"/>
<ellipse cx="332.1" cy="100.8" rx="1.5" ry="1.72"/>
<ellipse cx="405.5" cy="187.2" rx="0.6" ry="0.69"/>
<ellipse cx="334.1" cy="89.4" rx="0.5" ry="0.57"/>
<ellipse cx="418.9" cy="185.8" rx="0.7" ry="0.80"/>
<ellipse cx="427.8" cy="199.3" rx="0.8" ry="0.92"/>
<ellipse cx="436.7" cy="94.3" rx="1.5" ry="1.72"/>
<ellipse cx="384.5" cy="147.0" rx="0.8" ry="0.92"/>
<ellipse cx="417.3" cy="171.7" rx="1.2" ry="1.38"/>
<ellipse cx="427.8" cy="100.4" rx="0.6" ry="0.69"/>
<ellipse cx="423.7" cy="209.3" rx="0.7" ry="0.80"/>
<ellipse cx="368.3" cy="70.1" rx="0.7" ry="0.80"/>
<ellipse cx="345.1" cy="102.9" rx="0.6" ry="0.69"/>
<ellipse cx="335.0" cy="106.7" rx="0.8" ry="0.92"/>
<ellipse cx="419.8" cy="192.8" rx="1.5" ry="1.72"/>
<ellipse cx="375.8" cy="108.6" rx="2" ry="2.30"/>
<ellipse cx="436.7" cy="104.1" rx="0.7" ry="0.80"/>
<ellipse cx="381.0" cy="115.4" rx="2" ry="2.30"/>
<ellipse cx="342.0" cy="90.9" rx="0.9" ry="1.03"/>
<ellipse cx="397.0" cy="89.2" rx="2" ry="2.30"/>
<ellipse cx="344.8" cy="74.3" rx="0.9" ry="1.03"/>
<ellipse cx="425.6" cy="174.5" rx="1.2" ry="1.38"/>
<ellipse cx="346.0" cy="128.2" rx="0.7" ry="0.80"/>
<ellipse cx="385.9" cy="139.9" rx="0.9" ry="1.03"/>
<ellipse cx="398.1" cy="163.2" rx="0.8" ry="0.92"/>
<ellipse cx="357.0" cy="118.9" rx="0.5" ry="0.57"/>
<ellipse cx="412.9" cy="107.9" rx="1" ry="1.15"/>
<ellipse cx="379.6" cy="156.1" rx="1.5" ry="1.72"/>
<ellipse cx="462.6" cy="141.6" rx="0.7" ry="0.80"/>
<ellipse cx="332.7" cy="87.0" rx="2" ry="2.30"/>
<ellipse cx="335.2" cy="96.0" rx="0.7" ry="0.80"/>
<ellipse cx="353.5" cy="126.3" rx="0.7" ry="0.80"/>
<ellipse cx="368.3" cy="110.9" rx="0.9" ry="1.03"/>
<ellipse cx="343.1" cy="102.4" rx="0.6" ry="0.69"/>
<ellipse cx="381.7" cy="95.4" rx="0.6" ry="0.69"/>
<ellipse cx="416.7" cy="144.5" rx="1" ry="1.15"/>
<ellipse cx="409.1" cy="66.8" rx="0.5" ry="0.57"/>
<ellipse cx="421.5" cy="91.8" rx="0.6" ry="0.69"/>
<ellipse cx="424.0" cy="84.8" rx="0.8" ry="0.92"/>
<ellipse cx="365.1" cy="120.4" rx="2" ry="2.30"/>
<ellipse cx="419.4" cy="124.0" rx="1.5" ry="1.72"/>
<ellipse cx="427.6" cy="73.6" rx="0.8" ry="0.92"/>
<ellipse cx="339.7" cy="70.3" rx="1" ry="1.15"/>
<ellipse cx="377.7" cy="80.4" rx="1.2" ry="1.38"/>
<ellipse cx="412.3" cy="200.9" rx="2" ry="2.30"/>
<ellipse cx="471.4" cy="157.2" rx="2" ry="2.30"/>
<ellipse cx="436.2" cy="172.5" rx="1.2" ry="1.38"/>
<ellipse cx="446.2" cy="110.4" rx="0.6" ry="0.69"/>
<ellipse cx="356.1" cy="108.7" rx="0.9" ry="1.03"/>
<ellipse cx="425.3" cy="164.4" rx="0.8" ry="0.92"/>
<ellipse cx="430.3" cy="166.3" rx="0.6" ry="0.69"/>
</g>
<g fill="#bfe0d0" opacity=".8" filter="url(#b0)">
<circle cx="388.4" cy="343.8" r="1.3"/>
<circle cx="345.8" cy="301.9" r="1"/>
<circle cx="373.2" cy="325.3" r="0.5"/>
<circle cx="399.5" cy="339.7" r="0.6"/>
<circle cx="382.5" cy="345.0" r="1"/>
<circle cx="357.8" cy="341.4" r="0.8"/>
<circle cx="387.1" cy="339.3" r="0.5"/>
<circle cx="377.9" cy="331.3" r="0.5"/>
<circle cx="385.1" cy="346.6" r="0.8"/>
<circle cx="386.8" cy="341.6" r="0.8"/>
<circle cx="373.2" cy="335.8" r="1.3"/>
<circle cx="368.1" cy="316.8" r="0.6"/>
<circle cx="357.0" cy="298.1" r="0.6"/>
<circle cx="380.1" cy="335.7" r="1"/>
<circle cx="387.7" cy="333.9" r="0.5"/>
<circle cx="396.8" cy="339.0" r="0.5"/>
<circle cx="359.0" cy="296.3" r="1"/>
<circle cx="336.6" cy="288.2" r="0.6"/>
<circle cx="372.3" cy="324.5" r="0.5"/>
<circle cx="370.1" cy="342.2" r="1"/>
<circle cx="368.2" cy="324.0" r="1.3"/>
<circle cx="390.3" cy="347.7" r="0.6"/>
<circle cx="378.3" cy="337.5" r="0.5"/>
<circle cx="373.8" cy="326.6" r="0.8"/>
<circle cx="368.2" cy="331.2" r="0.5"/>
<circle cx="376.2" cy="310.1" r="1.3"/>
<circle cx="380.6" cy="337.5" r="0.5"/>
<circle cx="397.5" cy="330.8" r="1"/>
<circle cx="371.2" cy="331.8" r="0.6"/>
<circle cx="378.0" cy="338.1" r="0.5"/>
<circle cx="369.9" cy="334.9" r="1"/>
<circle cx="380.0" cy="317.4" r="0.6"/>
<circle cx="372.2" cy="314.1" r="0.5"/>
</g>
<g fill="#9fc4b0" opacity=".6" filter="url(#b0)">
<circle cx="464.3" cy="344.6" r="0.5"/>
<circle cx="499.4" cy="310.7" r="0.8"/>
<circle cx="425.2" cy="341.9" r="0.8"/>
<circle cx="479.5" cy="333.4" r="0.5"/>
<circle cx="467.8" cy="312.5" r="0.5"/>
<circle cx="447.2" cy="348.5" r="0.6"/>
<circle cx="466.1" cy="304.6" r="0.8"/>
<circle cx="421.1" cy="304.6" r="0.8"/>
<circle cx="447.1" cy="340.6" r="0.8"/>
<circle cx="475.8" cy="308.3" r="1"/>
<circle cx="448.0" cy="303.5" r="0.6"/>
<circle cx="489.3" cy="333.2" r="0.5"/>
<circle cx="447.7" cy="301.1" r="0.5"/>
<circle cx="487.2" cy="349.3" r="0.6"/>
<circle cx="486.1" cy="292.1" r="1"/>
<circle cx="468.4" cy="293.7" r="0.8"/>
<circle cx="460.8" cy="302.5" r="1"/>
<circle cx="450.8" cy="289.5" r="0.5"/>
<circle cx="440.8" cy="299.2" r="0.8"/>
<circle cx="456.3" cy="312.8" r="0.6"/>
<circle cx="491.1" cy="344.9" r="0.8"/>
<circle cx="492.2" cy="308.2" r="0.5"/>
<circle cx="458.6" cy="318.3" r="0.6"/>
<circle cx="437.9" cy="331.9" r="0.5"/>
<circle cx="486.0" cy="293.5" r="1"/>
<circle cx="488.6" cy="317.2" r="1"/>
<circle cx="476.0" cy="287.5" r="0.5"/>
<circle cx="494.0" cy="329.1" r="0.5"/>
<circle cx="446.3" cy="296.5" r="1"/>
<circle cx="446.3" cy="335.2" r="0.6"/>
<circle cx="453.1" cy="319.2" r="0.8"/>
<circle cx="489.1" cy="329.7" r="0.8"/>
<circle cx="448.0" cy="335.1" r="0.8"/>
<circle cx="436.4" cy="344.7" r="0.5"/>
<circle cx="497.1" cy="333.9" r="1"/>
<circle cx="425.0" cy="295.6" r="0.5"/>
<circle cx="476.5" cy="306.7" r="1"/>
<circle cx="496.4" cy="304.2" r="0.6"/>
<circle cx="426.8" cy="286.2" r="0.5"/>
<circle cx="432.8" cy="322.8" r="1"/>
<circle cx="449.4" cy="346.8" r="0.8"/>
<circle cx="444.5" cy="297.3" r="1"/>
<circle cx="428.2" cy="286.9" r="0.5"/>
<circle cx="439.5" cy="293.2" r="0.8"/>
<circle cx="475.0" cy="339.1" r="0.6"/>
<circle cx="439.6" cy="295.1" r="1"/>
<circle cx="493.3" cy="345.0" r="1"/>
<circle cx="424.1" cy="309.0" r="0.6"/>
<circle cx="425.4" cy="304.2" r="0.5"/>
<circle cx="420.2" cy="344.6" r="0.5"/>
<circle cx="489.3" cy="288.0" r="1"/>
<circle cx="439.1" cy="340.5" r="0.6"/>
<circle cx="427.7" cy="319.7" r="0.5"/>
<circle cx="430.0" cy="291.5" r="0.8"/>
<circle cx="455.2" cy="293.1" r="1"/>
<circle cx="485.9" cy="302.2" r="1"/>
<circle cx="462.9" cy="331.5" r="0.6"/>
<circle cx="475.6" cy="299.5" r="0.6"/>
<circle cx="430.0" cy="340.3" r="0.6"/>
<circle cx="464.3" cy="290.8" r="0.8"/>
</g>
<circle cx="365" cy="135" r="1.600" fill="#2a2a1c" opacity=".8"/>
<circle cx="350" cy="256" r="1.600" fill="#2a2a1c" opacity=".8"/>
<circle cx="337" cy="302" r="1.600" fill="#2a2a1c" opacity=".8"/>
<g fill="#f6d4e6" opacity=".55" filter="url(#b0)">
<ellipse cx="712.5" cy="95.8" rx="0.8" ry="0.8"/>
<ellipse cx="748.7" cy="121.6" rx="1" ry="1"/>
<ellipse cx="684.9" cy="126.3" rx="2.2" ry="1"/>
<ellipse cx="757.7" cy="110.4" rx="1.8" ry="0.8"/>
<ellipse cx="707.0" cy="156.4" rx="1.8" ry="2"/>
<ellipse cx="688.9" cy="140.8" rx="1" ry="1.4"/>
<ellipse cx="690.4" cy="137.1" rx="2.2" ry="1"/>
<ellipse cx="725.7" cy="126.3" rx="1.8" ry="2"/>
<ellipse cx="720.7" cy="140.1" rx="1" ry="2"/>
<ellipse cx="749.2" cy="106.2" rx="1.8" ry="1"/>
<ellipse cx="704.7" cy="107.3" rx="1.8" ry="2"/>
<ellipse cx="716.9" cy="167.0" rx="1.3" ry="1.4"/>
<ellipse cx="713.6" cy="157.8" rx="1.3" ry="1"/>
<ellipse cx="701.2" cy="138.9" rx="0.8" ry="2.4"/>
<ellipse cx="719.5" cy="103.1" rx="2.2" ry="2.4"/>
<ellipse cx="685.1" cy="127.1" rx="0.8" ry="2"/>
<ellipse cx="717.4" cy="107.8" rx="0.8" ry="2"/>
<ellipse cx="715.7" cy="125.5" rx="0.8" ry="0.8"/>
<ellipse cx="724.4" cy="123.0" rx="1" ry="2"/>
<ellipse cx="736.2" cy="102.4" rx="2.2" ry="0.8"/>
<ellipse cx="731.0" cy="100.2" rx="0.8" ry="0.8"/>
<ellipse cx="727.6" cy="157.9" rx="2.2" ry="1"/>
<ellipse cx="728.0" cy="163.8" rx="2.2" ry="2.4"/>
<ellipse cx="683.7" cy="107.2" rx="1.8" ry="0.8"/>
<ellipse cx="726.1" cy="111.7" rx="0.8" ry="1"/>
<ellipse cx="723.6" cy="123.1" rx="2.2" ry="1"/>
<ellipse cx="716.6" cy="108.1" rx="1.8" ry="0.8"/>
<ellipse cx="687.2" cy="154.9" rx="1.8" ry="1"/>
<ellipse cx="730.5" cy="118.7" rx="1.3" ry="1"/>
<ellipse cx="694.5" cy="107.2" rx="2.2" ry="1.4"/>
<ellipse cx="736.8" cy="134.7" rx="1.3" ry="1"/>
<ellipse cx="700.1" cy="158.1" rx="1" ry="2.4"/>
<ellipse cx="707.0" cy="164.5" rx="2.2" ry="0.8"/>
<ellipse cx="700.1" cy="141.2" rx="1.3" ry="0.8"/>
<ellipse cx="740.2" cy="136.2" rx="1" ry="1"/>
<ellipse cx="685.2" cy="106.5" rx="1" ry="2"/>
<ellipse cx="701.3" cy="119.6" rx="0.8" ry="1"/>
<ellipse cx="727.1" cy="163.1" rx="2.2" ry="1"/>
<ellipse cx="725.4" cy="116.6" rx="1.8" ry="2.4"/>
<ellipse cx="724.4" cy="110.8" rx="1.8" ry="1"/>
<ellipse cx="736.2" cy="109.1" rx="0.8" ry="1"/>
<ellipse cx="708.6" cy="125.0" rx="2.2" ry="1.4"/>
<ellipse cx="720.4" cy="138.0" rx="2.2" ry="0.8"/>
<ellipse cx="732.9" cy="134.4" rx="2.2" ry="2.4"/>
<ellipse cx="698.4" cy="101.4" rx="1.8" ry="1.4"/>
<ellipse cx="702.9" cy="135.7" rx="2.2" ry="2"/>
<ellipse cx="716.8" cy="164.7" rx="2.2" ry="0.8"/>
<ellipse cx="734.1" cy="143.9" rx="1" ry="0.8"/>
<ellipse cx="695.1" cy="98.1" rx="2.2" ry="1"/>
<ellipse cx="725.6" cy="144.0" rx="2.2" ry="2"/>
<ellipse cx="716.8" cy="102.7" rx="2.2" ry="2"/>
<ellipse cx="721.0" cy="132.0" rx="1.3" ry="0.8"/>
<ellipse cx="725.7" cy="166.1" rx="2.2" ry="1.4"/>
<ellipse cx="722.8" cy="150.4" rx="1.3" ry="1.4"/>
<ellipse cx="709.1" cy="124.9" rx="2.2" ry="1"/>
<ellipse cx="707.8" cy="103.1" rx="2.2" ry="2"/>
<ellipse cx="720.5" cy="117.7" rx="1" ry="2"/>
<ellipse cx="714.2" cy="101.1" rx="1.3" ry="2.4"/>
<ellipse cx="738.7" cy="156.8" rx="1" ry="2"/>
<ellipse cx="745.4" cy="143.1" rx="1.3" ry="2.4"/>
<ellipse cx="701.0" cy="157.4" rx="2.2" ry="0.8"/>
<ellipse cx="713.4" cy="165.7" rx="1.8" ry="1"/>
<ellipse cx="710.5" cy="139.1" rx="1.3" ry="1"/>
<ellipse cx="682.1" cy="103.7" rx="1" ry="1"/>
<ellipse cx="724.2" cy="108.9" rx="1.3" ry="0.8"/>
<ellipse cx="730.8" cy="126.4" rx="2.2" ry="1"/>
<ellipse cx="750.9" cy="126.1" rx="1.8" ry="1"/>
<ellipse cx="746.7" cy="120.1" rx="1.3" ry="0.8"/>
<ellipse cx="727.8" cy="166.7" rx="2.2" ry="0.8"/>
<ellipse cx="741.8" cy="137.6" rx="1.3" ry="1"/>
<ellipse cx="519.6" cy="113.9" rx="1.3" ry="1.4"/>
<ellipse cx="497.6" cy="131.4" rx="0.8" ry="1"/>
<ellipse cx="494.3" cy="93.7" rx="1" ry="2"/>
<ellipse cx="480.5" cy="103.4" rx="1.8" ry="1.4"/>
<ellipse cx="500.5" cy="92.6" rx="2.2" ry="2"/>
<ellipse cx="502.3" cy="135.7" rx="1" ry="1"/>
<ellipse cx="501.4" cy="119.3" rx="1.3" ry="1.4"/>
<ellipse cx="481.7" cy="121.3" rx="1.8" ry="2"/>
<ellipse cx="504.9" cy="91.6" rx="2.2" ry="1.4"/>
<ellipse cx="488.7" cy="139.9" rx="1.8" ry="2"/>
<ellipse cx="490.8" cy="84.4" rx="2.2" ry="2"/>
<ellipse cx="498.3" cy="136.7" rx="1" ry="0.8"/>
<ellipse cx="487.2" cy="83.0" rx="2.2" ry="0.8"/>
<ellipse cx="515.2" cy="134.0" rx="0.8" ry="1"/>
<ellipse cx="518.0" cy="81.8" rx="1.8" ry="0.8"/>
<ellipse cx="520.0" cy="96.2" rx="0.8" ry="2"/>
<ellipse cx="485.0" cy="106.9" rx="2.2" ry="1"/>
<ellipse cx="499.9" cy="134.2" rx="2.2" ry="1"/>
<ellipse cx="493.7" cy="98.5" rx="0.8" ry="2"/>
<ellipse cx="517.9" cy="106.4" rx="1" ry="1"/>
<ellipse cx="494.5" cy="127.3" rx="1.3" ry="1"/>
<ellipse cx="499.7" cy="81.0" rx="1" ry="0.8"/>
<ellipse cx="478.1" cy="107.9" rx="0.8" ry="1"/>
<ellipse cx="482.2" cy="132.2" rx="0.8" ry="1.4"/>
<ellipse cx="481.0" cy="106.3" rx="1" ry="2.4"/>
<ellipse cx="691.4" cy="307.1" rx="0.8" ry="0.8"/>
<ellipse cx="649.0" cy="294.6" rx="0.8" ry="1"/>
<ellipse cx="713.2" cy="339.7" rx="2.2" ry="2"/>
<ellipse cx="666.9" cy="319.7" rx="2.2" ry="2.4"/>
<ellipse cx="659.0" cy="335.0" rx="1" ry="2"/>
<ellipse cx="704.4" cy="306.9" rx="0.8" ry="1"/>
<ellipse cx="646.8" cy="305.4" rx="2.2" ry="2.4"/>
<ellipse cx="660.7" cy="292.5" rx="1.3" ry="2"/>
<ellipse cx="715.5" cy="336.0" rx="1.8" ry="1.4"/>
<ellipse cx="703.0" cy="321.5" rx="1.8" ry="1.4"/>
<ellipse cx="650.2" cy="331.5" rx="1.3" ry="2"/>
<ellipse cx="666.0" cy="323.5" rx="1.3" ry="2"/>
<ellipse cx="658.0" cy="313.2" rx="1.8" ry="1.4"/>
<ellipse cx="682.0" cy="300.8" rx="2.2" ry="1.4"/>
<ellipse cx="712.3" cy="293.1" rx="1.3" ry="2.4"/>
<ellipse cx="682.7" cy="334.9" rx="2.2" ry="2"/>
<ellipse cx="682.7" cy="314.1" rx="0.8" ry="2"/>
<ellipse cx="680.3" cy="307.2" rx="1.3" ry="2"/>
<ellipse cx="717.7" cy="320.8" rx="1.3" ry="1"/>
<ellipse cx="687.0" cy="346.2" rx="1.8" ry="1"/>
<ellipse cx="709.3" cy="337.0" rx="1" ry="2.4"/>
<ellipse cx="719.1" cy="314.1" rx="0.8" ry="2"/>
<ellipse cx="702.9" cy="296.0" rx="1" ry="0.8"/>
<ellipse cx="703.9" cy="338.0" rx="1" ry="2"/>
<ellipse cx="681.7" cy="340.0" rx="2.2" ry="1"/>
<ellipse cx="683.1" cy="303.1" rx="0.8" ry="1"/>
<ellipse cx="663.6" cy="339.3" rx="1.8" ry="2"/>
<ellipse cx="674.2" cy="330.2" rx="2.2" ry="2"/>
<ellipse cx="673.7" cy="342.5" rx="2.2" ry="1.4"/>
<ellipse cx="712.2" cy="351.2" rx="2.2" ry="2.4"/>
<ellipse cx="660.3" cy="298.1" rx="1.3" ry="1"/>
<ellipse cx="692.2" cy="301.0" rx="1.8" ry="2.4"/>
<ellipse cx="669.0" cy="346.0" rx="1" ry="1.4"/>
<ellipse cx="714.0" cy="292.4" rx="1" ry="1.4"/>
<ellipse cx="460.1" cy="234.4" rx="0.8" ry="2"/>
<ellipse cx="468.1" cy="261.2" rx="0.8" ry="2.4"/>
<ellipse cx="485.7" cy="249.3" rx="1.8" ry="2"/>
<ellipse cx="475.8" cy="235.1" rx="1.3" ry="1.4"/>
<ellipse cx="440.6" cy="218.2" rx="1" ry="2.4"/>
<ellipse cx="485.2" cy="229.2" rx="1.3" ry="0.8"/>
<ellipse cx="485.7" cy="244.4" rx="2.2" ry="1"/>
<ellipse cx="430.8" cy="246.3" rx="0.8" ry="1"/>
<ellipse cx="430.1" cy="220.3" rx="2.2" ry="2.4"/>
<ellipse cx="487.5" cy="212.1" rx="2.2" ry="0.8"/>
<ellipse cx="481.7" cy="215.3" rx="1.3" ry="1.4"/>
<ellipse cx="474.8" cy="263.3" rx="1.8" ry="1.4"/>
<ellipse cx="470.1" cy="244.7" rx="2.2" ry="2"/>
<ellipse cx="461.0" cy="225.8" rx="0.8" ry="2.4"/>
<ellipse cx="467.8" cy="264.1" rx="2.2" ry="1.4"/>
<ellipse cx="481.2" cy="204.3" rx="1.3" ry="2"/>
<ellipse cx="460.1" cy="214.0" rx="2.2" ry="1"/>
<ellipse cx="489.1" cy="237.5" rx="1.3" ry="2.4"/>
<ellipse cx="460.3" cy="231.7" rx="1.3" ry="2.4"/>
<ellipse cx="468.6" cy="210.1" rx="1.3" ry="1"/>
<ellipse cx="433.9" cy="201.8" rx="2.2" ry="2"/>
<ellipse cx="480.3" cy="227.4" rx="1" ry="2.4"/>
<ellipse cx="593.1" cy="87.7" rx="1.3" ry="1"/>
<ellipse cx="579.7" cy="92.8" rx="1.8" ry="1"/>
<ellipse cx="571.7" cy="77.3" rx="1.3" ry="2"/>
<ellipse cx="592.6" cy="83.8" rx="1.3" ry="1.4"/>
<ellipse cx="583.2" cy="79.6" rx="0.8" ry="1.4"/>
<ellipse cx="624.7" cy="89.0" rx="1" ry="2"/>
<ellipse cx="634.2" cy="81.9" rx="0.8" ry="2"/>
<ellipse cx="628.1" cy="115.9" rx="1.8" ry="2"/>
<ellipse cx="577.6" cy="94.0" rx="0.8" ry="1.4"/>
<ellipse cx="607.5" cy="91.2" rx="1.3" ry="0.8"/>
<ellipse cx="637.7" cy="95.4" rx="1.8" ry="0.8"/>
<ellipse cx="601.4" cy="112.4" rx="0.8" ry="1"/>
<ellipse cx="635.1" cy="87.3" rx="2.2" ry="1"/>
<ellipse cx="596.0" cy="117.9" rx="1.8" ry="1"/>
<ellipse cx="585.4" cy="86.9" rx="1.3" ry="1.4"/>
<ellipse cx="589.3" cy="74.9" rx="0.8" ry="1.4"/>
</g>
</g></svg>
<!-- CENTER CONTENT -->
<div class="t12" style="left:545px;top:41.600px;color:#e0e0e0;letter-spacing:-.37px" id="vtitle">IMG_0424.mov</div>
<svg class="abs" style="left:849px;top:41px" width="23" height="14" viewBox="0 0 23 14"><rect x="0.9" y="1.5" width="20.6" height="11" rx="1.3" fill="none" stroke="#3f3fa0" stroke-width="1.2"/><path d="M11.2 0V14" stroke="#3f3fa0" stroke-width="1.2"/></svg>
<div class="t" style="left:887px;top:40px;color:#e6e6e6;letter-spacing:-.3px">30%</div>
<svg class="abs" style="left:916.500px;top:44px" width="10" height="8" viewBox="0 0 10 8"><path d="M1.8 2.3L5 5.4L8.2 2.3" stroke="#d8d8d8" stroke-width="1.4" fill="none"/></svg>
<div class="abs" style="left:242px;top:365px;width:683px;height:15px;background:#161616"></div>
<div class="abs" style="left:359px;top:366px;width:283px;height:13px;background:#757575"></div>
<svg class="abs" style="left:350px;top:358px" width="310" height="24" viewBox="0 0 310 24"><path d="M3 8L9 14.5L3 21Z" fill="#757575"/><path d="M9.6 8.6H15.4V11.6L12.5 14.2L9.6 11.6Z" fill="#757575" stroke="#fff" stroke-width="1.1"/><path d="M12.5 14V21" stroke="#fff" stroke-width="1.2"/><path d="M70.8 3H77.3V10.4L74.05 8.3L70.8 10.4Z" fill="#e8893a"/><path d="M203.3 3H209.8V10.4L206.55 8.3L203.3 10.4Z" fill="#e8893a"/><path d="M291.8 8H294V21H291.8Z" fill="#f4b62c"/><path d="M301 8.3V20.7L294 14.5Z" fill="#f4b62c"/></svg>
<svg class="abs" style="left:468px;top:384.400px" width="72" height="22" viewBox="0 0 72 22"><path d="M2.8 5.5V18.5" stroke="#bcbcbc" stroke-width="1.6"/><path d="M15 5.5V18.5L4.2 12Z" fill="#bcbcbc"/><path d="M27.5 2.8V21.2L44 12Z" fill="#bcbcbc"/><path d="M68.6 5.5V18.5" stroke="#bcbcbc" stroke-width="1.6"/><path d="M56.4 5.5V18.5L67.2 12Z" fill="#bcbcbc"/></svg>
<div class="abs" id="tc" style="left:568.500px;top:384.300px;font-size:21px;line-height:24px;letter-spacing:.06px;color:#c4c4c4;white-space:nowrap;-webkit-text-stroke:.62px #1f1f1f">00:00:00:28</div>
<svg class="abs" style="left:687px;top:393px" width="10" height="8" viewBox="0 0 10 8"><path d="M2 2.3L5.2 5.4L8.4 2.3" stroke="#d8d8d8" stroke-width="1.4" fill="none"/></svg>
<svg class="abs" style="left:850px;top:387px" width="74" height="20" viewBox="0 0 74 20"><path d="M2.9 3.6Q2.9 3 3.5 3H15.3Q15.9 3 15.9 3.6V16.2L9.4 12.6L2.9 16.2Z" fill="none" stroke="#d9822f" stroke-width="1.2" stroke-linejoin="round"/><path d="M22.8 8.3L26 11.4L29.2 8.3" stroke="#d8d8d8" stroke-width="1.4" fill="none"/><path d="M41.4 3H55.2Q56.4 3 56.4 4.2V12.2Q56.4 13.4 55.2 13.4H50.8L48.6 16.4V13.4H41.4Q40.2 13.4 40.2 12.2V4.2Q40.2 3 41.4 3Z" fill="none" stroke="#565656" stroke-width="1.1"/><path d="M42.5 8.5H54M42.5 10.8H50" stroke="#4c4c4c" stroke-width=".9"/><path d="M62.3 8.3L65.5 11.4L68.7 8.3" stroke="#d8d8d8" stroke-width="1.4" fill="none"/></svg>
<div class="abs" style="left:235px;top:424px;width:698px;height:335px;background:#161616;border-radius:5px;box-shadow:inset 0 0 0 1px #2e2e2e"></div>
<div class="abs" style="left:235px;top:424px;width:698px;height:29px;background:#2d2d2d;border-radius:5px 5px 0 0"></div>
<div class="t" style="left:263px;top:430.300px;color:#e4e4e4;letter-spacing:-0.533px">IMG_0424.mov, 150802_012.mov</div>
<div class="t11" style="left:901.500px;top:430.600px;color:#6060dc;letter-spacing:-0.154px">Add</div>
<svg class="abs" style="left:241px;top:429px" width="16" height="16" viewBox="0 0 16 16"><defs><linearGradient id="bi" x1="0" y1="0" x2="0" y2="1"><stop offset="0" stop-color="#f0f0f0"/><stop offset="1" stop-color="#b4b4b4"/></linearGradient></defs><g transform="rotate(-6 8 8)"><rect x="4.500" y="2.300" width="5.500" height="3" rx=".6" fill="#4cb04a"/><rect x="5" y="11" width="6" height="3" rx=".6" fill="#e8452c"/><rect x="8" y="11.600" width="3.500" height="2.200" rx=".6" fill="#f0a030"/><rect x="2" y="3.600" width="12.200" height="9" rx="1.300" fill="url(#bi)"/><path d="M6 10.500L7.600 6.500L8.800 8.300L9.800 7.200L10.800 10.500Z" fill="#555" opacity=".8"/><circle cx="8.300" cy="6.300" r="1.100" fill="#444" opacity=".8"/></g></svg>
<div class="abs" style="left:238px;top:452px;width:692px;height:152px;background:#535353;border-radius:4px"></div>
<div class="abs" style="left:240.5px;top:492px;width:687px;height:110px;background:#161616;border-radius:3px"></div>
<svg class="abs" style="left:245px;top:459.600px" width="44" height="24.600" viewBox="324 62 520 292" preserveAspectRatio="none"><use href="#flowerg"/></svg>
<div class="t" style="left:298px;top:464.8px;color:#e8e8e8;letter-spacing:-0.633px">IMG_0424.mov</div>
<svg class="abs" style="left:795px;top:464px" width="16" height="16" viewBox="0 0 16 16"><g transform="translate(7.800,8)" fill="none" stroke="#d8d8d8"><circle r="3.300" stroke-width="1.700"/><g stroke-width="2"><path d="M0 -3.800V-6.200M0 3.800V6.200M-3.800 0H-6.200M3.800 0H6.200M2.700 2.700L4.400 4.400M-2.700 2.700L-4.400 4.400M2.700 -2.700L4.400 -4.400M-2.700 -2.700L-4.400 -4.400"/></g></g></svg><div class="t" style="left:817px;top:464.800px;color:#ececec;letter-spacing:-0.258px">Create Blu-ray disc</div>
<div class="t11" style="left:245px;top:497px;color:#e0e0e0;letter-spacing:-0.15px">Captions</div>
<div class="t11" style="left:904.500px;top:497px;color:#6060dc;letter-spacing:-0.023px">Set</div>
<div class="abs" style="left:242px;top:512px;width:684px;height:1px;background:#2c2c2c"></div>
<div class="t11" style="left:245px;top:519px;color:#e0e0e0;letter-spacing:0.02px">Setting</div>
<div class="t11" style="left:515px;top:519px;color:#e0e0e0;letter-spacing:-0.118px">Location</div>
<div class="t11" style="left:618px;top:519px;color:#e0e0e0;letter-spacing:-0.369px">Filename</div>
<div class="t11" style="left:901.500px;top:519px;color:#6060dc;letter-spacing:-0.154px">Add</div>
<div class="abs" style="left:242px;top:534px;width:684px;height:1px;background:#2c2c2c"></div>
<svg class="abs" style="left:246.600px;top:539.7px" width="16" height="16" viewBox="0 0 16 16"><rect x="1" y="2" width="13.400" height="12" rx="1.300" fill="#262626" stroke="#c4c4c4" stroke-width="1.200"/><path d="M7.700 2V14" stroke="#c4c4c4" stroke-width=".9"/><path d="M3.200 4.600H4Q6.400 4.600 6.400 8Q6.400 11.400 4 11.400H3.200Z" fill="#cfcfcf"/><path d="M12.200 4.600H11.400Q9 4.600 9 8Q9 11.400 11.400 11.400H12.200Z" fill="#cfcfcf"/></svg>
<div class="t" style="left:267px;top:540.2px;color:#e8e8e8;letter-spacing:-0.29px">Dolby Digital</div>
<svg class="abs" style="left:514px;top:541.0px" width="16" height="14" viewBox="0 0 16 14"><path d="M1 2.2Q1 1 2.2 1H5.6L7 2.6H12.8Q14 2.6 14 3.8V10.8Q14 12 12.8 12H2.2Q1 12 1 10.8Z" fill="#7a72c8"/><path d="M1 4.2H14V10.8Q14 12 12.8 12H2.2Q1 12 1 10.8Z" fill="#8d86d6"/><circle cx="7.5" cy="8" r="1.9" fill="none" stroke="#6258b8" stroke-width="1"/></svg>
<div class="t" style="left:534px;top:540.2px;color:#e8e8e8;letter-spacing:-0.499px">Source</div>
<svg class="abs" style="left:619px;top:539.4px" width="13" height="16" viewBox="0 0 13 16"><rect x="1" y="1.500" width="10.800" height="13" rx=".5" fill="#f8f8f8"/><circle cx="6.400" cy="7.700" r="4.500" fill="#ee7a22"/><circle cx="6.400" cy="6.800" r="3.400" fill="#f59a3c" opacity=".7"/><rect x="4" y="6.300" width="2.100" height="2.700" rx=".4" fill="#fdf4ec"/><rect x="6.700" y="6.300" width="2.100" height="2.700" rx=".4" fill="#fdf4ec"/></svg>
<div class="t" style="left:637px;top:540.2px;color:#e8e8e8;letter-spacing:-0.303px">IMG_0424-Dolby Digital.ac3</div>
<svg class="abs" style="left:246.600px;top:561.3px" width="16" height="16" viewBox="0 0 16 16"><circle cx="7.800" cy="8" r="6.700" fill="#9c9c9c"/><circle cx="7.800" cy="8" r="5.300" fill="none" stroke="#7a7a7a" stroke-width="1.200"/><circle cx="7.800" cy="8" r="3" fill="#444"/><circle cx="7.800" cy="8" r="1.700" fill="#1a1a1a"/><circle cx="7.800" cy="8" r="2.400" fill="none" stroke="#8a8a8a" stroke-width=".6"/></svg>
<div class="t" style="left:267px;top:561.8px;color:#e8e8e8;letter-spacing:-0.178px">H.264 for Blu-ray</div>
<svg class="abs" style="left:514px;top:562.6px" width="16" height="14" viewBox="0 0 16 14"><path d="M1 2.2Q1 1 2.2 1H5.6L7 2.6H12.8Q14 2.6 14 3.8V10.8Q14 12 12.8 12H2.2Q1 12 1 10.8Z" fill="#7a72c8"/><path d="M1 4.2H14V10.8Q14 12 12.8 12H2.2Q1 12 1 10.8Z" fill="#8d86d6"/><circle cx="7.5" cy="8" r="1.9" fill="none" stroke="#6258b8" stroke-width="1"/></svg>
<div class="t" style="left:534px;top:561.8px;color:#e8e8e8;letter-spacing:-0.499px">Source</div>
<svg class="abs" style="left:619px;top:561.0px" width="13" height="16" viewBox="0 0 13 16"><rect x="1" y="1.500" width="10.800" height="13" rx=".5" fill="#f8f8f8"/><circle cx="6.200" cy="8" r="3.100" fill="#1e3050"/><circle cx="6" cy="7.800" r="2" fill="#2a9cf0"/><circle cx="5.600" cy="7.400" r="1" fill="#7fd4ff"/><path d="M7.600 9.600L9.400 11.200" stroke="#1e3050" stroke-width="1.500"/></svg>
<div class="t" style="left:637px;top:561.8px;color:#e8e8e8;letter-spacing:-0.215px">IMG_0424-H.264 for Blu-ray.264</div>
<svg class="abs" style="left:246.600px;top:582.9px" width="16" height="16" viewBox="0 0 16 16"><rect x="4.600" y="0.9" width="6.600" height="13.8" rx="1.400" fill="#3a3a3a" stroke="#a8a8a8" stroke-width="1"/></svg>
<div class="t" style="left:267px;top:583.4px;color:#e8e8e8;letter-spacing:-0.368px">Apple Devices 4K</div>
<svg class="abs" style="left:514px;top:584.2px" width="16" height="14" viewBox="0 0 16 14"><path d="M1 2.2Q1 1 2.2 1H5.6L7 2.6H12.8Q14 2.6 14 3.8V10.8Q14 12 12.8 12H2.2Q1 12 1 10.8Z" fill="#7a72c8"/><path d="M1 4.2H14V10.8Q14 12 12.8 12H2.2Q1 12 1 10.8Z" fill="#8d86d6"/><circle cx="7.5" cy="8" r="1.9" fill="none" stroke="#6258b8" stroke-width="1"/></svg>
<div class="t" style="left:534px;top:583.4px;color:#e8e8e8;letter-spacing:-0.499px">Source</div>
<svg class="abs" style="left:619px;top:582.6px" width="13" height="16" viewBox="0 0 13 16"><path d="M1 2.300Q1 1.500 1.800 1.500H8.400L11.800 4.900V13.700Q11.800 14.500 11 14.500H1.800Q1 14.500 1 13.700Z" fill="#f6f6f6"/><path d="M8.400 1.500V4.900H11.800Z" fill="#c4c4c4"/><rect x="3.200" y="4.500" width="1.900" height="5" fill="#e0452e"/><rect x="5.100" y="4.500" width="1.900" height="5" fill="#58b040"/><rect x="7" y="4.500" width="1.700" height="5" fill="#3a78e0"/><rect x="3.200" y="4.500" width="5.500" height="1.600" fill="#f0c030" opacity=".7"/><path d="M3 10.200H9L7.400 11.800H4.600Z" fill="#c8ccd4"/></svg>
<div class="t" style="left:637px;top:583.4px;color:#e8e8e8;letter-spacing:-0.364px">IMG_0424-Apple Devices 4K.m4v</div>
<div class="abs" style="left:238px;top:606px;width:692px;height:107px;background:#2d2d2d;border-radius:4px"></div>
<div class="abs" style="left:240.5px;top:645px;width:687px;height:66px;background:#161616;border-radius:3px"></div>
<svg class="abs" style="left:245px;top:612.600px" width="44" height="24.600" viewBox="0 0 44 24.600"><defs><filter id="tb" x="-5%" y="-5%" width="110%" height="110%"><feGaussianBlur stdDeviation=".5"/></filter><clipPath id="tc2"><rect width="44" height="24.600"/></clipPath></defs><g clip-path="url(#tc2)"><rect width="44" height="24.600" fill="#4a5a34"/><g filter="url(#tb)"><rect x="-1" y="-1" width="24" height="3" fill="#c4d4dc"/><path d="M-1 1.600L22 1.300L22 9L-1 9Z" fill="#5e7554"/><path d="M-1 4.500L4 5.500L8 8L13 6L17 7.500L20 10L20 16L-1 17Z" fill="#5c7c36"/><path d="M-1 10L6 11L9 14L14 15L17 16L-1 19Z" fill="#86a04a"/><path d="M20 -1H45V26H36L24 15L20 10Z" fill="#3a4426"/><path d="M21 1L25 0L26 8L25 14L21 12Z" fill="#4a5a30"/><path d="M28 3L32 4L31 13L28 14Z" fill="#77883e"/><path d="M37 5L39.500 4L40 16L37 17Z" fill="#6a7a3c"/><path d="M41 0H45V26H41Z" fill="#4c4a38"/><path d="M36 15L41 14L42 25L38 25Z" fill="#7c7466"/><path d="M-1 17L17 15.500L17.500 16.500L-1 21Z" fill="#6c6444"/><path d="M-1 21L18 15.400L23.500 15.400L37 25L-1 25Z" fill="#b9b5ad"/><path d="M24.500 15.500L26 15.500L39 25L36 25Z" fill="#d6d2c4"/><path d="M25.300 14L27 14L27.200 18.500L25.800 18.500Z" fill="#1e1e20"/></g></g></svg>
<div class="t" style="left:298px;top:617.8px;color:#e8e8e8;letter-spacing:-0.598px">150802_012.mov</div>
<div class="t11" style="left:245px;top:650px;color:#e0e0e0;letter-spacing:-0.15px">Captions</div>
<div class="t11" style="left:904.500px;top:650px;color:#6060dc;letter-spacing:-0.023px">Set</div>
<div class="abs" style="left:242px;top:665px;width:684px;height:1px;background:#2c2c2c"></div>
<div class="t11" style="left:245px;top:672px;color:#e0e0e0;letter-spacing:0.02px">Setting</div>
<div class="t11" style="left:515px;top:672px;color:#e0e0e0;letter-spacing:-0.118px">Location</div>
<div class="t11" style="left:618px;top:672px;color:#e0e0e0;letter-spacing:-0.369px">Filename</div>
<div class="t11" style="left:901.500px;top:672px;color:#6060dc;letter-spacing:-0.154px">Add</div>
<div class="abs" style="left:242px;top:687px;width:684px;height:1px;background:#2c2c2c"></div>
<svg class="abs" style="left:246.600px;top:692.7px" width="16" height="16" viewBox="0 0 16 16"><rect x="1" y="1.6" width="13.6" height="12.6" rx="2" fill="#c8c8c8"/><circle cx="7.6" cy="7.800" r="3.400" fill="none" stroke="#2a2a2a" stroke-width="1.800"/><path d="M8.6 8.8L11.6 12" stroke="#2a2a2a" stroke-width="1.800"/></svg>
<div class="t" style="left:267px;top:693.2px;color:#e8e8e8;letter-spacing:-0.512px">Apple ProRes 422 HQ</div>
<svg class="abs" style="left:514px;top:694.0px" width="16" height="14" viewBox="0 0 16 14"><path d="M1 2.2Q1 1 2.2 1H5.6L7 2.6H12.8Q14 2.6 14 3.8V10.8Q14 12 12.8 12H2.2Q1 12 1 10.8Z" fill="#7a72c8"/><path d="M1 4.2H14V10.8Q14 12 12.8 12H2.2Q1 12 1 10.8Z" fill="#8d86d6"/><circle cx="7.5" cy="8" r="1.9" fill="none" stroke="#6258b8" stroke-width="1"/></svg>
<div class="t" style="left:534px;top:693.2px;color:#e8e8e8;letter-spacing:-0.499px">Source</div>
<svg class="abs" style="left:619px;top:692.4px" width="13" height="16" viewBox="0 0 13 16"><path d="M1 2.300Q1 1.500 1.800 1.500H8.400L11.800 4.900V13.700Q11.800 14.500 11 14.500H1.800Q1 14.500 1 13.700Z" fill="#f6f6f6"/><path d="M8.400 1.500V4.900H11.800Z" fill="#c4c4c4"/><circle cx="6.400" cy="9.300" r="3.300" fill="#1e3050"/><circle cx="6.200" cy="9.100" r="2.200" fill="#2a9cf0"/><circle cx="5.800" cy="8.700" r="1.100" fill="#7fd4ff"/><path d="M8 11L9.800 12.800" stroke="#1e3050" stroke-width="1.500"/></svg>
<div class="t" style="left:637px;top:693.2px;color:#e8e8e8;letter-spacing:-0.489px">150802_012-Apple ProRes 422 HQ.mov</div>
<svg class="abs" style="left:236px;top:771px" width="30" height="20" viewBox="0 0 30 20"><path d="M8.500 4V15.500M2.800 9.750H14.200" stroke="#bdbdbd" stroke-width="1.100" fill="none"/><path d="M18.300 8.800L21.200 11.600L24.100 8.800" stroke="#c8c8c8" stroke-width="1.300" fill="none"/></svg>
<div class="t" style="left:648.500px;top:772px;color:#e4e4e4;letter-spacing:-0.385px">Process on:</div>
<div class="t" style="left:729.500px;top:772px;color:#e4e4e4;letter-spacing:-0.32px">This Computer</div>
<svg class="abs" style="left:814px;top:772px" width="10" height="16" viewBox="0 0 10 16"><path d="M2 6.300L5 3.300L8 6.300M2 9.700L5 12.700L8 9.700" stroke="#c8c8c8" stroke-width="1.200" fill="none"/></svg>
<div class="abs" style="left:844.500px;top:770.900px;width:86px;height:17.300px;background:#4e4e4e;border-radius:3px;box-shadow:inset 0 .5px 0 #616161"></div>
<div class="t" style="left:856.500px;top:771.600px;color:#f0f0f0;letter-spacing:-0.22px">Start Batch</div>
<!-- RIGHT CONTENT -->
<div class="t12" style="left:1113px;top:41.600px;color:#e0e0e0;letter-spacing:-0.21px">Job</div>
<div class="card" style="top:70px;height:162px"></div>
<svg class="abs" style="left:965px;top:80.500px" width="13" height="16" viewBox="0 0 13 16"><path d="M1 2.300Q1 1.500 1.800 1.500H7.400L11.800 5.900V13.700Q11.800 14.500 11 14.500H1.800Q1 14.500 1 13.700Z" fill="#f8f8f8"/><path d="M7.400 1.500V5.900H11.800Z" fill="#d0d0d0"/><rect x="1" y="2.500" width="1.500" height="11.500" fill="#cfcfcf"/><rect x="10.300" y="6" width="1.500" height="8" fill="#cfcfcf"/><circle cx="6.400" cy="9.300" r="3.100" fill="#1e3050"/><circle cx="6.200" cy="9.100" r="2.300" fill="#2a8cf0"/><circle cx="5.700" cy="9.400" r="1.100" fill="#5ad0ff"/><path d="M8 10.600L9.600 12.200" stroke="#1e3050" stroke-width="1.500"/></svg>
<div class="t" style="left:991px;top:81px;color:#ececec;letter-spacing:-0.588px">IMG_0424.mov</div>
<div class="abs" style="left:1248px;top:80px;width:33px;height:17.500px;background:#6c6c6c;border-radius:3.500px"></div>
<div class="abs" style="left:1248px;top:80px;width:33px;height:17.500px;text-align:center;font-weight:bold;font-size:12px;line-height:18px;color:#0a0a0a;letter-spacing:-.3px">SDR</div>
<div class="t11" style="left:991px;top:104.7px;letter-spacing:-0.045px">/Users/jeffy/Desktop</div>
<div class="t11" style="left:991px;top:124.4px;letter-spacing:-0.228px">QuickTime movie</div>
<div class="t11" style="left:991px;top:144.0px;letter-spacing:-0.219px">Video: Apple ProRes 422 Proxy, 1920 x 1080, Progressive,</div>
<div class="t11" style="left:991px;top:157.0px;letter-spacing:-0.158px">Square, 30 fps, Rec. 709*</div>
<div class="t11" style="left:991px;top:176.6px;letter-spacing:-0.122px">Audio: Linear PCM, 24-bit Integer (Little Endian), Mono,</div>
<div class="t11" style="left:991px;top:189.6px;letter-spacing:-0.054px">48.000 kHz</div>
<div class="t11" style="left:991px;top:209.2px;letter-spacing:0.003px">Duration: 00:00:05:05</div>
<div class="t12" style="left:964px;top:245.7px;color:#dedede;letter-spacing:-0.184px">Timing</div>
<div class="card" style="top:264.500px;height:70.500px"></div>
<div class="lab" style="top:272.2px;letter-spacing:0.035px">Start:</div>
<div class="t11" style="left:1065.500px;top:272.2px;letter-spacing:0.005px">00:00:00:01</div>
<div class="lab" style="top:292.8px;letter-spacing:-0.071px">In point:</div>
<div class="t11" style="left:1065.500px;top:292.8px;letter-spacing:0.155px">00:00:00:28</div>
<div class="lab" style="top:312.7px;letter-spacing:0.001px">Duration (in-out):</div>
<div class="t11" style="left:1065.500px;top:312.7px;letter-spacing:0.155px">00:00:02:04</div>
<div class="t12" style="left:964px;top:348.6px;color:#dedede;letter-spacing:-0.224px">File Properties</div>
<div class="card" style="top:367.500px;height:58px"></div>
<div class="lab" style="top:377.8px;letter-spacing:-0.329px">Language:</div>
<div class="sel" style="left:1066.3px;top:377.4px;width:124.4px;height:14.8px"><span style="line-height:14.8px;letter-spacing:-0.248px">Unknown language</span><svg width="8" height="11" viewBox="0 0 8 11"><path d="M1.200 4.300L4 1.500L6.800 4.300M1.200 6.700L4 9.500L6.800 6.700" stroke="#dcdcdc" stroke-width="1.100" fill="none"/></svg></div>
<div class="lab" style="top:401.2px;letter-spacing:-0.13px">Country:</div>
<div class="sel" style="left:1066.3px;top:400.8px;width:124.4px;height:14.8px"><span style="line-height:14.8px;letter-spacing:-0.324px">No Value</span><svg width="8" height="11" viewBox="0 0 8 11"><path d="M1.200 4.300L4 1.500L6.800 4.300M1.200 6.700L4 9.500L6.800 6.700" stroke="#dcdcdc" stroke-width="1.100" fill="none"/></svg></div>
<div class="t12" style="left:964px;top:439.3px;color:#dedede;letter-spacing:-0.184px">Video Properties</div>
<div class="card" style="top:458px;height:101.500px"></div>
<div class="lab" style="top:468.2px;letter-spacing:-0.152px">Field order:</div>
<div class="sel" style="left:1066.3px;top:467.8px;width:124.4px;height:14.8px"><span style="line-height:14.8px;letter-spacing:-0.231px">Progressive</span><svg width="8" height="11" viewBox="0 0 8 11"><path d="M1.200 4.300L4 1.500L6.800 4.300M1.200 6.700L4 9.500L6.800 6.700" stroke="#dcdcdc" stroke-width="1.100" fill="none"/></svg></div>
<div class="lab" style="top:491.9px;letter-spacing:-0.218px">Color space:</div>
<div class="sel" style="left:1066.3px;top:491.5px;width:124.4px;height:14.8px"><span style="line-height:14.8px;letter-spacing:-0.205px">Rec. 709*</span><svg width="8" height="11" viewBox="0 0 8 11"><path d="M1.200 4.300L4 1.500L6.800 4.300M1.200 6.700L4 9.500L6.800 6.700" stroke="#dcdcdc" stroke-width="1.100" fill="none"/></svg></div>
<div class="lab" style="top:515.1px;letter-spacing:-0.295px">Camera log:</div>
<div class="sel" style="left:1066.3px;top:514.7px;width:124.4px;height:14.8px"><span style="line-height:14.8px;letter-spacing:-0.324px">No Value</span><svg width="8" height="11" viewBox="0 0 8 11"><path d="M1.200 4.300L4 1.500L6.800 4.300M1.200 6.700L4 9.500L6.800 6.700" stroke="#dcdcdc" stroke-width="1.100" fill="none"/></svg></div>
<div class="t11" style="left:1066px;top:537.2px;letter-spacing:-0.227px">* Source, † Inferred</div>
<div class="t12" style="left:964px;top:573.1px;color:#dedede;letter-spacing:-0.258px">Metadata</div>
<div class="t12" style="left:964px;top:606.0px;color:#dedede;letter-spacing:-0.44px">HDR Metadata</div>
<div class="t12" style="left:964px;top:639.0px;color:#dedede;letter-spacing:-0.129px">360° Metadata</div>
<div class="t12" style="left:964px;top:670.8px;color:#dedede;letter-spacing:-0.232px">Audio Properties</div>
<div class="card" style="top:690px;height:110px"></div>
<div class="abs" style="left:1064.800px;top:698.700px;width:216px;height:100px;background:#1e1e1e;border:1px solid #454545"></div>
<div class="lab" style="top:703.100px;letter-spacing:-0.094px">Audio tracks:</div>
<div class="abs" style="left:1072px;top:705.300px;width:10.500px;height:10.500px;border-radius:2.500px;background:linear-gradient(#6a6ef0,#5054d8)"></div>
<svg class="abs" style="left:1072px;top:705.300px" width="11" height="11" viewBox="0 0 11 11"><path d="M2.600 5.600L4.500 7.700L8 3" stroke="#fff" stroke-width="1.300" fill="none"/></svg>
<div class="sel" style="left:1096px;top:703.1px;width:121px;height:15px"><span style="line-height:15px;letter-spacing:-0.32px">Mono</span><svg width="8" height="11" viewBox="0 0 8 11"><path d="M1.200 4.300L4 1.500L6.800 4.300M1.200 6.700L4 9.500L6.800 6.700" stroke="#dcdcdc" stroke-width="1.100" fill="none"/></svg></div>
</div>
</body>
</html>
